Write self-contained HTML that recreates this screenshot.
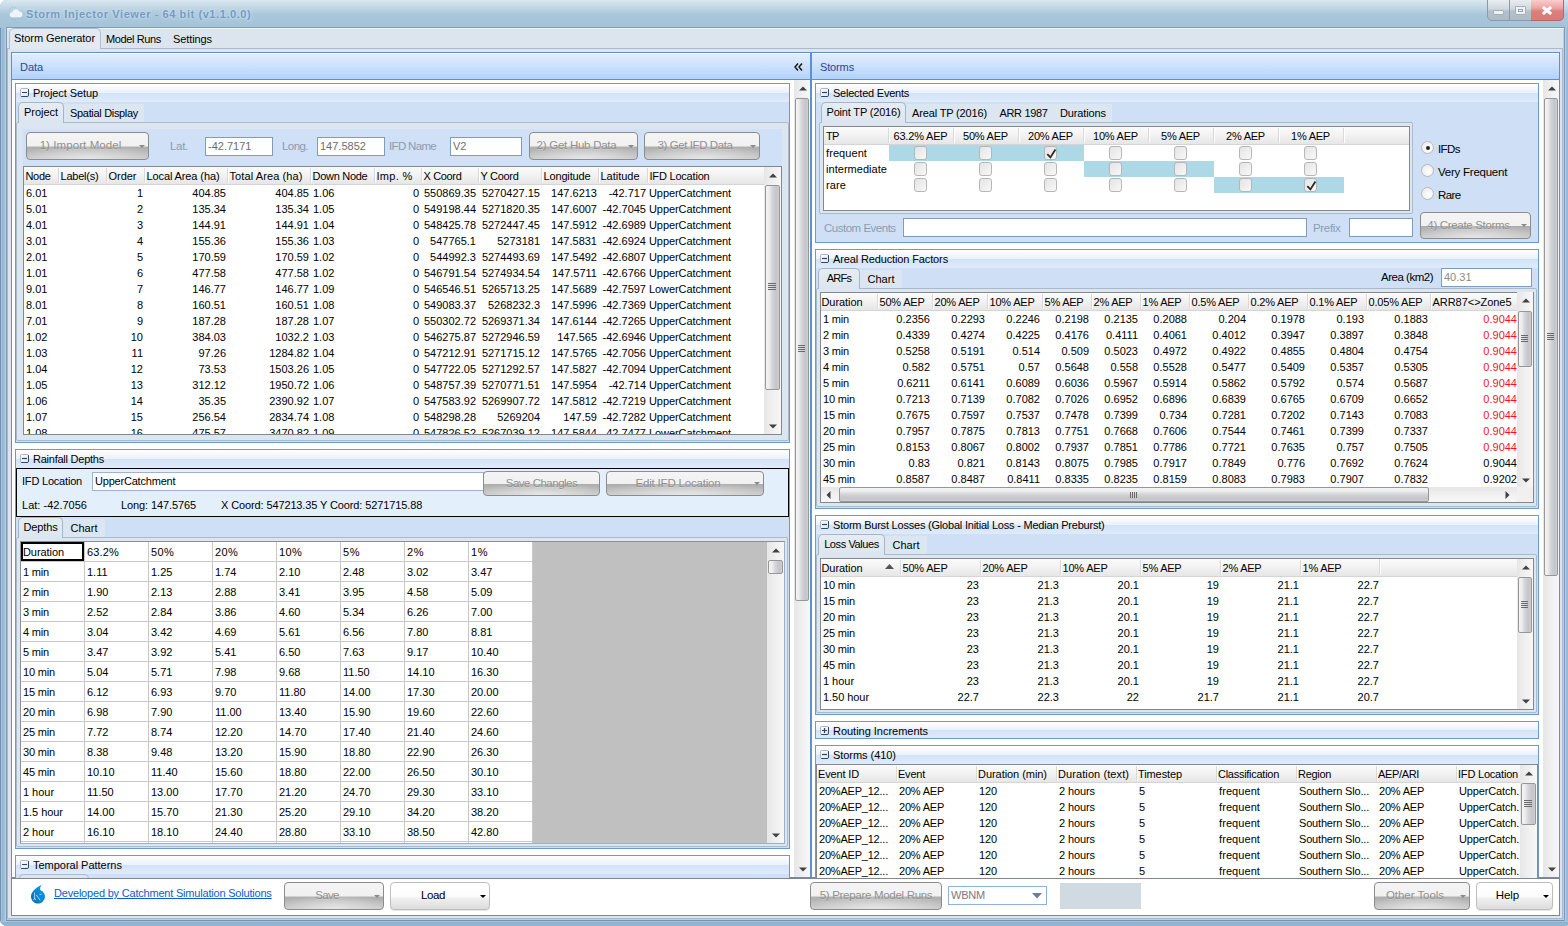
<!DOCTYPE html><html><head><meta charset="utf-8"><title>Storm Injector Viewer</title><style>
html,body{margin:0;padding:0;background:#fff;}
body{width:1568px;height:926px;overflow:hidden;font-family:"Liberation Sans",sans-serif;font-size:11px;color:#000;}
#win{letter-spacing:-0.2px;position:absolute;left:0;top:0;width:1568px;height:926px;overflow:hidden;border-radius:7px 0 2px 7px;background:#92b3d1;}
#win div{position:absolute;box-sizing:border-box;white-space:nowrap;}
.t{overflow:visible;}
.r{text-align:right;}
.c{text-align:center;}
.clip{overflow:hidden;}
.hdr{background:linear-gradient(#fbfbfb,#f3f3f3 45%,#e6e6e6);border-bottom:1px solid #d5d5d5;}
.sep{background:#d9d9d9;border-right:1px solid #fff;}
.grp{border:1px solid #6b99d8;background:#cfe0f6;}
.grph{background:linear-gradient(#ffffff,#eaf1fa 50%,#d2e2f6 50%,#dfebfb);}
.btn{border:1px solid #8c8c8c;border-radius:4px;color:#9a9a9a;font-size:12px;text-align:center;background:radial-gradient(ellipse 60% 55% at 50% 100%,#e6e6e6,rgba(230,230,230,0) 100%),linear-gradient(#f4f4f4,#f1f1f1 51%,#adadad 53%,#c9c9c9);}
.btn2{border:1px solid #bdbdbd;border-radius:4px;color:#000;font-size:12px;text-align:center;background:linear-gradient(#ffffff,#fdfdfd 50%,#efefef 60%,#dcdcdc);box-shadow:0 1px 0 #e6e6e6;}
.inp{background:#fff;border:1px solid #7f9db9;color:#6d6d6d;font-size:11px;letter-spacing:0;}
.sbv{background:linear-gradient(90deg,#e6e6e6,#f0f0f0 50%,#f7f7f7);}
.thv{border:1px solid #979797;border-radius:2px;background:linear-gradient(90deg,#f4f4f4,#ececec 25%,#d6d7da 45%,#c4c4c9 80%,#d0d0d2);}
.sbh{background:linear-gradient(#e6e6e6,#f0f0f0 50%,#f7f7f7);}
.thh{border:1px solid #979797;border-radius:2px;background:linear-gradient(#f4f4f4,#ececec 25%,#d6d7da 45%,#c4c4c9 80%,#d0d0d2);}
.cb{border:1px solid #b6b6b6;border-radius:3px;background:linear-gradient(135deg,#e4e4e4,#f8f8f8);}
.rb{border:1px solid #b9b9b9;border-radius:50%;background:radial-gradient(circle at 60% 60%,#ffffff,#e6e6e6);}
.n{letter-spacing:0;}
.sg{font-size:11.5px;letter-spacing:-0.45px;}

</style></head><body>
<div id="win">
<div style="left:0px;top:0px;width:1568px;height:29px;background:linear-gradient(#dbe8f0,#c3d8e5 25%,#a9c7db 50%,#a5c3d8);"></div>
<div style="left:0px;top:28px;width:6px;height:898px;background:linear-gradient(90deg,#7393b2 0 1px,#9dc0da 1px 2px,#98b9d4 2px 4px,#a3c1da 4px 5px,#b0cde2 5px 6px);"></div>
<div style="left:1565px;top:28px;width:3px;height:898px;background:linear-gradient(90deg,#b0cde2 0 1px,#9dbcd7 1px 2px,#98b9d4 2px 3px);"></div>
<div style="left:0px;top:921px;width:1568px;height:5px;background:linear-gradient(#a3c3dc 0 1px,#8eb1ce 1px,#94b7d3);"></div>
<div style="left:6px;top:27px;width:1559px;height:894px;background:#dce5ed;border:1px solid #7d9bb9;border-bottom-color:#7394b7;"></div>
<div style="left:7px;top:28px;width:1557px;height:1px;background:#eef3f8;"></div>
<div style="left:1563px;top:29px;width:1px;height:891px;background:#bfd0dc;"></div>
<div style="left:7px;top:919px;width:1557px;height:1px;background:#bdd0db;"></div>
<svg style="position:absolute;left:8px;top:6px" width="16" height="16" viewBox="0 0 16 16"><path d="M1.2 3.2l1.5-.9M3.5 1.6l1.6-.5M6.2 1l1.6.3" stroke="#8ccaea" stroke-width="0.9" fill="none"/><path d="M4.2 11.3a2.6 2.6 0 0 1 .2-5.2 3.6 3.6 0 0 1 6.8-.6 2.9 2.9 0 0 1 .5 5.8Z" fill="#eef5fa"/><path d="M5 12.6l-.5 1.2M7.6 13l-.5 1.6M10.2 12.6l-.5 1.2" stroke="#7fc6ea" stroke-width="1"/></svg>
<div class="t" style="left:26px;top:5px;height:18px;line-height:18px;font-weight:bold;font-size:11px;letter-spacing:0.58px;color:#759bc1;text-shadow:0 0 2px #d3e3ee,0 0 4px #cfe0ec;">Storm Injector Viewer - 64 bit (v1.1.0.0)</div>
<div style="left:1487px;top:-1px;width:77px;height:22px;border:1px solid #8b9aa6;border-radius:0 0 5px 5px;background:linear-gradient(#e9edf0,#cfd7dd 45%,#b5c1ca 55%,#aebbc5);"></div>
<div style="left:1509px;top:0px;width:1px;height:20px;background:#8b9aa6;"></div>
<div style="left:1531px;top:-1px;width:33px;height:22px;border:1px solid #b86565;border-left:none;border-radius:0 0 5px 0;background:linear-gradient(#f9cdcc,#eba5a4 40%,#dc7f7f 55%,#d97979);"></div>
<div style="left:1493px;top:10px;width:11px;height:5px;background:#eef2f5;border:1px solid #a3b0bb;border-radius:1px;"></div>
<div style="left:1515px;top:6px;width:11px;height:9px;background:#eef2f5;border:1px solid #a3b0bb;border-radius:1px;"></div>
<div style="left:1518px;top:9px;width:5px;height:3px;background:#eef2f5;border:1px solid #96a5b1;"></div>
<svg style="position:absolute;left:1541px;top:6px" width="12" height="9"><path d="M1.8 1L10.2 8M10.2 1L1.8 8" stroke="#fff" stroke-width="3"/></svg>
<div style="left:7px;top:48px;width:1556px;height:871px;border:1px solid #a9bac9;"></div>
<div style="left:9px;top:28px;width:92px;height:21px;border:1px solid #b0bfcd;border-bottom:none;border-radius:5px 5px 0 0;background:#e2e9f0;"></div>
<div class="t" style="left:14px;top:30px;height:16px;line-height:16px;letter-spacing:-0.06px;">Storm Generator</div>
<div class="t" style="left:106px;top:31px;height:16px;line-height:16px;letter-spacing:-0.37px;">Model Runs</div>
<div class="t" style="left:173px;top:31px;height:16px;line-height:16px;letter-spacing:-0.09px;">Settings</div>
<div style="left:11px;top:52px;width:800px;height:826px;border:1px solid #5f8fd3;background:#fff;"></div>
<div style="left:12px;top:53px;width:798px;height:26px;background:linear-gradient(#e1edfd,#cbe0fc 50%,#b2d3fc);border-top:1px solid #fff;"></div>
<div style="left:11px;top:79px;width:800px;height:1px;background:#5f8fd3;"></div>
<div class="t" style="left:20px;top:59px;height:16px;line-height:16px;color:#27479a;letter-spacing:-0.06px;">Data</div>
<div style="left:811px;top:52px;width:749px;height:826px;border:1px solid #5f8fd3;background:#fff;"></div>
<div style="left:812px;top:53px;width:747px;height:26px;background:linear-gradient(#e1edfd,#cbe0fc 50%,#b2d3fc);border-top:1px solid #fff;"></div>
<div style="left:811px;top:79px;width:749px;height:1px;background:#5f8fd3;"></div>
<div class="t" style="left:820px;top:59px;height:16px;line-height:16px;color:#27479a;letter-spacing:-0.14px;">Storms</div>
<svg style="position:absolute;left:794px;top:63px" width="9" height="8"><path d="M4 0.5L1 4L4 7.5M8 0.5L5 4L8 7.5" fill="none" stroke="#111" stroke-width="1.4"/></svg>
<div class="sbv" style="left:794px;top:80px;width:16px;height:797px;"></div>
<svg style="position:absolute;left:799px;top:86px" width="8" height="5"><path d="M0 4.5L4 0.5L8 4.5Z" fill="#404040"/></svg>
<svg style="position:absolute;left:799px;top:867px" width="8" height="5"><path d="M0 0.5L4 4.5L8 0.5Z" fill="#404040"/></svg>
<div class="thv" style="left:795px;top:98px;width:14px;height:503px;"></div>
<div style="left:798px;top:345px;width:7px;height:1px;background:#6a6a6a;"></div>
<div style="left:798px;top:347px;width:7px;height:1px;background:#6a6a6a;"></div>
<div style="left:798px;top:349px;width:7px;height:1px;background:#6a6a6a;"></div>
<div style="left:798px;top:351px;width:7px;height:1px;background:#6a6a6a;"></div>
<div class="grp" style="left:15px;top:83px;width:775px;height:360px;"></div>
<div class="grph" style="left:16px;top:84px;width:773px;height:18px;"></div>
<svg style="position:absolute;left:20px;top:88px" width="9" height="9"><defs><linearGradient id="xg20_88" x1="0" y1="0" x2="1" y2="1"><stop offset="0" stop-color="#ffffff"/><stop offset="1" stop-color="#dde4f3"/></linearGradient></defs><rect x="0.5" y="0.5" width="8" height="8" rx="1.2" fill="url(#xg20_88)" stroke="#a9b7c6"/><path d="M8.5 1.2V7.3Q8.5 8.5 7.3 8.5H1.2" fill="none" stroke="#2f4862" stroke-width="1"/><path d="M2 4.5H7" stroke="#27466a" stroke-width="1.2"/></svg>
<div class="t" style="left:33px;top:85px;height:16px;line-height:16px;letter-spacing:-0.08px;">Project Setup</div>
<div style="left:18px;top:102px;width:46px;height:21px;border:1px solid #a3b7cc;border-bottom:none;border-radius:5px 5px 0 0;background:linear-gradient(#e6ecf1,#dce6f0);z-index:2;"></div>
<div class="t" style="left:18px;top:103px;width:46px;height:18px;line-height:18px;text-align:center;z-index:3;letter-spacing:-0.03px;">Project</div>
<div style="left:64px;top:104px;width:80px;height:18px;background:#dbe6f1;"></div>
<div class="t" style="left:64px;top:105px;width:80px;height:16px;line-height:16px;text-align:center;letter-spacing:-0.32px;">Spatial Display</div>
<div style="left:16px;top:122px;width:773px;height:319px;border:1px solid #a9bac9;border-radius:2px;background:#dce6f0;"></div>
<div style="left:20px;top:122px;width:43px;height:1px;background:#dce6f0;z-index:3;"></div>
<div style="left:23px;top:129px;width:759px;height:37px;background:#cfe0f7;"></div>
<div class="btn" style="left:26px;top:132px;width:123px;height:28px;"></div>
<div class="t" style="left:26px;top:132px;width:109px;height:27px;line-height:27px;font-size:11.5px;letter-spacing:0.08px;text-align:center;color:#909090;text-shadow:0 1px 0 rgba(255,255,255,0.25);">1) Import Model</div>
<svg style="position:absolute;left:139px;top:145px" width="6" height="3"><path d="M0 0H6L3 3Z" fill="#8a8a8a"/></svg>
<div class="t sg" style="left:170px;top:138px;height:16px;line-height:16px;color:#8d9cb0;letter-spacing:-0.30px;">Lat.</div>
<div class="inp" style="left:205px;top:137px;width:68px;height:19px;"><div style="left:2px;top:0;line-height:17px;">-42.7171</div></div>
<div class="t sg" style="left:282px;top:138px;height:16px;line-height:16px;color:#8d9cb0;letter-spacing:-0.56px;">Long.</div>
<div class="inp" style="left:317px;top:137px;width:68px;height:19px;"><div style="left:2px;top:0;line-height:17px;">147.5852</div></div>
<div class="t sg" style="left:389px;top:138px;height:16px;line-height:16px;color:#8d9cb0;letter-spacing:-0.67px;">IFD Name</div>
<div class="inp" style="left:450px;top:137px;width:72px;height:19px;"><div style="left:2px;top:0;line-height:17px;">V2</div></div>
<div class="btn" style="left:529px;top:132px;width:109px;height:28px;"></div>
<div class="t" style="left:529px;top:132px;width:95px;height:27px;line-height:27px;font-size:11.5px;letter-spacing:-0.26px;text-align:center;color:#909090;text-shadow:0 1px 0 rgba(255,255,255,0.25);">2) Get Hub Data</div>
<svg style="position:absolute;left:628px;top:145px" width="6" height="3"><path d="M0 0H6L3 3Z" fill="#8a8a8a"/></svg>
<div class="btn" style="left:644px;top:132px;width:116px;height:28px;"></div>
<div class="t" style="left:644px;top:132px;width:102px;height:27px;line-height:27px;font-size:11.5px;letter-spacing:-0.41px;text-align:center;color:#909090;text-shadow:0 1px 0 rgba(255,255,255,0.25);">3) Get IFD Data</div>
<svg style="position:absolute;left:750px;top:145px" width="6" height="3"><path d="M0 0H6L3 3Z" fill="#8a8a8a"/></svg>
<div style="left:23px;top:166px;width:759px;height:269px;border:1px solid #828790;background:#fff;"></div>
<div class="clip" style="left:24px;top:167px;width:757px;height:267px;background:#fff;"></div>
<div class="hdr" style="left:24px;top:167px;width:740px;height:18px;"></div>
<div class="t" style="left:25.5px;top:168px;height:17px;line-height:17px;letter-spacing:-0.32px;">Node</div>
<div class="sep" style="left:58px;top:168px;width:2px;height:15px;"></div>
<div class="t" style="left:60.5px;top:168px;height:17px;line-height:17px;letter-spacing:-0.22px;">Label(s)</div>
<div class="sep" style="left:106px;top:168px;width:2px;height:15px;"></div>
<div class="t" style="left:108.5px;top:168px;height:17px;line-height:17px;letter-spacing:-0.02px;">Order</div>
<div class="sep" style="left:144px;top:168px;width:2px;height:15px;"></div>
<div class="t" style="left:146.5px;top:168px;height:17px;line-height:17px;letter-spacing:-0.11px;">Local Area (ha)</div>
<div class="sep" style="left:227px;top:168px;width:2px;height:15px;"></div>
<div class="t" style="left:229.5px;top:168px;height:17px;line-height:17px;letter-spacing:0.10px;">Total Area (ha)</div>
<div class="sep" style="left:310px;top:168px;width:2px;height:15px;"></div>
<div class="t" style="left:312.5px;top:168px;height:17px;line-height:17px;letter-spacing:-0.28px;">Down Node</div>
<div class="sep" style="left:374px;top:168px;width:2px;height:15px;"></div>
<div class="t" style="left:376.5px;top:168px;height:17px;line-height:17px;letter-spacing:0.30px;">Imp. %</div>
<div class="sep" style="left:421px;top:168px;width:2px;height:15px;"></div>
<div class="t" style="left:423.5px;top:168px;height:17px;line-height:17px;letter-spacing:-0.34px;">X Coord</div>
<div class="sep" style="left:478px;top:168px;width:2px;height:15px;"></div>
<div class="t" style="left:480.5px;top:168px;height:17px;line-height:17px;letter-spacing:-0.31px;">Y Coord</div>
<div class="sep" style="left:541px;top:168px;width:2px;height:15px;"></div>
<div class="t" style="left:543.5px;top:168px;height:17px;line-height:17px;letter-spacing:-0.15px;">Longitude</div>
<div class="sep" style="left:598px;top:168px;width:2px;height:15px;"></div>
<div class="t" style="left:600.5px;top:168px;height:17px;line-height:17px;letter-spacing:-0.02px;">Latitude</div>
<div class="sep" style="left:647px;top:168px;width:2px;height:15px;"></div>
<div class="t" style="left:649.5px;top:168px;height:17px;line-height:17px;letter-spacing:-0.20px;">IFD Location</div>
<div class="clip n" style="left:24px;top:185px;width:740px;height:16px;"><div style="left:2px;top:0;width:30px;height:16px;line-height:16px;">6.01</div><div style="left:83px;top:0;width:36px;height:16px;line-height:16px;text-align:right;">1</div><div style="left:121px;top:0;width:81px;height:16px;line-height:16px;text-align:right;">404.85</div><div style="left:204px;top:0;width:81px;height:16px;line-height:16px;text-align:right;">404.85</div><div style="left:289px;top:0;width:40px;height:16px;line-height:16px;">1.06</div><div style="left:351px;top:0;width:44px;height:16px;line-height:16px;text-align:right;">0</div><div style="left:398px;top:0;width:54px;height:16px;line-height:16px;text-align:right;">550869.35</div><div style="left:455px;top:0;width:61px;height:16px;line-height:16px;text-align:right;">5270427.15</div><div style="left:518px;top:0;width:55px;height:16px;line-height:16px;text-align:right;">147.6213</div><div style="left:575px;top:0;width:47px;height:16px;line-height:16px;text-align:right;">-42.717</div><div style="left:625px;top:0;width:110px;height:16px;line-height:16px;letter-spacing:-0.08px;">UpperCatchment</div></div>
<div class="clip n" style="left:24px;top:201px;width:740px;height:16px;"><div style="left:2px;top:0;width:30px;height:16px;line-height:16px;">5.01</div><div style="left:83px;top:0;width:36px;height:16px;line-height:16px;text-align:right;">2</div><div style="left:121px;top:0;width:81px;height:16px;line-height:16px;text-align:right;">135.34</div><div style="left:204px;top:0;width:81px;height:16px;line-height:16px;text-align:right;">135.34</div><div style="left:289px;top:0;width:40px;height:16px;line-height:16px;">1.05</div><div style="left:351px;top:0;width:44px;height:16px;line-height:16px;text-align:right;">0</div><div style="left:398px;top:0;width:54px;height:16px;line-height:16px;text-align:right;">549198.44</div><div style="left:455px;top:0;width:61px;height:16px;line-height:16px;text-align:right;">5271820.35</div><div style="left:518px;top:0;width:55px;height:16px;line-height:16px;text-align:right;">147.6007</div><div style="left:575px;top:0;width:47px;height:16px;line-height:16px;text-align:right;">-42.7045</div><div style="left:625px;top:0;width:110px;height:16px;line-height:16px;letter-spacing:-0.08px;">UpperCatchment</div></div>
<div class="clip n" style="left:24px;top:217px;width:740px;height:16px;"><div style="left:2px;top:0;width:30px;height:16px;line-height:16px;">4.01</div><div style="left:83px;top:0;width:36px;height:16px;line-height:16px;text-align:right;">3</div><div style="left:121px;top:0;width:81px;height:16px;line-height:16px;text-align:right;">144.91</div><div style="left:204px;top:0;width:81px;height:16px;line-height:16px;text-align:right;">144.91</div><div style="left:289px;top:0;width:40px;height:16px;line-height:16px;">1.04</div><div style="left:351px;top:0;width:44px;height:16px;line-height:16px;text-align:right;">0</div><div style="left:398px;top:0;width:54px;height:16px;line-height:16px;text-align:right;">548425.78</div><div style="left:455px;top:0;width:61px;height:16px;line-height:16px;text-align:right;">5272447.45</div><div style="left:518px;top:0;width:55px;height:16px;line-height:16px;text-align:right;">147.5912</div><div style="left:575px;top:0;width:47px;height:16px;line-height:16px;text-align:right;">-42.6989</div><div style="left:625px;top:0;width:110px;height:16px;line-height:16px;letter-spacing:-0.08px;">UpperCatchment</div></div>
<div class="clip n" style="left:24px;top:233px;width:740px;height:16px;"><div style="left:2px;top:0;width:30px;height:16px;line-height:16px;">3.01</div><div style="left:83px;top:0;width:36px;height:16px;line-height:16px;text-align:right;">4</div><div style="left:121px;top:0;width:81px;height:16px;line-height:16px;text-align:right;">155.36</div><div style="left:204px;top:0;width:81px;height:16px;line-height:16px;text-align:right;">155.36</div><div style="left:289px;top:0;width:40px;height:16px;line-height:16px;">1.03</div><div style="left:351px;top:0;width:44px;height:16px;line-height:16px;text-align:right;">0</div><div style="left:398px;top:0;width:54px;height:16px;line-height:16px;text-align:right;">547765.1</div><div style="left:455px;top:0;width:61px;height:16px;line-height:16px;text-align:right;">5273181</div><div style="left:518px;top:0;width:55px;height:16px;line-height:16px;text-align:right;">147.5831</div><div style="left:575px;top:0;width:47px;height:16px;line-height:16px;text-align:right;">-42.6924</div><div style="left:625px;top:0;width:110px;height:16px;line-height:16px;letter-spacing:-0.08px;">UpperCatchment</div></div>
<div class="clip n" style="left:24px;top:249px;width:740px;height:16px;"><div style="left:2px;top:0;width:30px;height:16px;line-height:16px;">2.01</div><div style="left:83px;top:0;width:36px;height:16px;line-height:16px;text-align:right;">5</div><div style="left:121px;top:0;width:81px;height:16px;line-height:16px;text-align:right;">170.59</div><div style="left:204px;top:0;width:81px;height:16px;line-height:16px;text-align:right;">170.59</div><div style="left:289px;top:0;width:40px;height:16px;line-height:16px;">1.02</div><div style="left:351px;top:0;width:44px;height:16px;line-height:16px;text-align:right;">0</div><div style="left:398px;top:0;width:54px;height:16px;line-height:16px;text-align:right;">544992.3</div><div style="left:455px;top:0;width:61px;height:16px;line-height:16px;text-align:right;">5274493.69</div><div style="left:518px;top:0;width:55px;height:16px;line-height:16px;text-align:right;">147.5492</div><div style="left:575px;top:0;width:47px;height:16px;line-height:16px;text-align:right;">-42.6807</div><div style="left:625px;top:0;width:110px;height:16px;line-height:16px;letter-spacing:-0.08px;">UpperCatchment</div></div>
<div class="clip n" style="left:24px;top:265px;width:740px;height:16px;"><div style="left:2px;top:0;width:30px;height:16px;line-height:16px;">1.01</div><div style="left:83px;top:0;width:36px;height:16px;line-height:16px;text-align:right;">6</div><div style="left:121px;top:0;width:81px;height:16px;line-height:16px;text-align:right;">477.58</div><div style="left:204px;top:0;width:81px;height:16px;line-height:16px;text-align:right;">477.58</div><div style="left:289px;top:0;width:40px;height:16px;line-height:16px;">1.02</div><div style="left:351px;top:0;width:44px;height:16px;line-height:16px;text-align:right;">0</div><div style="left:398px;top:0;width:54px;height:16px;line-height:16px;text-align:right;">546791.54</div><div style="left:455px;top:0;width:61px;height:16px;line-height:16px;text-align:right;">5274934.54</div><div style="left:518px;top:0;width:55px;height:16px;line-height:16px;text-align:right;">147.5711</div><div style="left:575px;top:0;width:47px;height:16px;line-height:16px;text-align:right;">-42.6766</div><div style="left:625px;top:0;width:110px;height:16px;line-height:16px;letter-spacing:-0.08px;">UpperCatchment</div></div>
<div class="clip n" style="left:24px;top:281px;width:740px;height:16px;"><div style="left:2px;top:0;width:30px;height:16px;line-height:16px;">9.01</div><div style="left:83px;top:0;width:36px;height:16px;line-height:16px;text-align:right;">7</div><div style="left:121px;top:0;width:81px;height:16px;line-height:16px;text-align:right;">146.77</div><div style="left:204px;top:0;width:81px;height:16px;line-height:16px;text-align:right;">146.77</div><div style="left:289px;top:0;width:40px;height:16px;line-height:16px;">1.09</div><div style="left:351px;top:0;width:44px;height:16px;line-height:16px;text-align:right;">0</div><div style="left:398px;top:0;width:54px;height:16px;line-height:16px;text-align:right;">546546.51</div><div style="left:455px;top:0;width:61px;height:16px;line-height:16px;text-align:right;">5265713.25</div><div style="left:518px;top:0;width:55px;height:16px;line-height:16px;text-align:right;">147.5689</div><div style="left:575px;top:0;width:47px;height:16px;line-height:16px;text-align:right;">-42.7597</div><div style="left:625px;top:0;width:110px;height:16px;line-height:16px;letter-spacing:-0.08px;">LowerCatchment</div></div>
<div class="clip n" style="left:24px;top:297px;width:740px;height:16px;"><div style="left:2px;top:0;width:30px;height:16px;line-height:16px;">8.01</div><div style="left:83px;top:0;width:36px;height:16px;line-height:16px;text-align:right;">8</div><div style="left:121px;top:0;width:81px;height:16px;line-height:16px;text-align:right;">160.51</div><div style="left:204px;top:0;width:81px;height:16px;line-height:16px;text-align:right;">160.51</div><div style="left:289px;top:0;width:40px;height:16px;line-height:16px;">1.08</div><div style="left:351px;top:0;width:44px;height:16px;line-height:16px;text-align:right;">0</div><div style="left:398px;top:0;width:54px;height:16px;line-height:16px;text-align:right;">549083.37</div><div style="left:455px;top:0;width:61px;height:16px;line-height:16px;text-align:right;">5268232.3</div><div style="left:518px;top:0;width:55px;height:16px;line-height:16px;text-align:right;">147.5996</div><div style="left:575px;top:0;width:47px;height:16px;line-height:16px;text-align:right;">-42.7369</div><div style="left:625px;top:0;width:110px;height:16px;line-height:16px;letter-spacing:-0.08px;">UpperCatchment</div></div>
<div class="clip n" style="left:24px;top:313px;width:740px;height:16px;"><div style="left:2px;top:0;width:30px;height:16px;line-height:16px;">7.01</div><div style="left:83px;top:0;width:36px;height:16px;line-height:16px;text-align:right;">9</div><div style="left:121px;top:0;width:81px;height:16px;line-height:16px;text-align:right;">187.28</div><div style="left:204px;top:0;width:81px;height:16px;line-height:16px;text-align:right;">187.28</div><div style="left:289px;top:0;width:40px;height:16px;line-height:16px;">1.07</div><div style="left:351px;top:0;width:44px;height:16px;line-height:16px;text-align:right;">0</div><div style="left:398px;top:0;width:54px;height:16px;line-height:16px;text-align:right;">550302.72</div><div style="left:455px;top:0;width:61px;height:16px;line-height:16px;text-align:right;">5269371.34</div><div style="left:518px;top:0;width:55px;height:16px;line-height:16px;text-align:right;">147.6144</div><div style="left:575px;top:0;width:47px;height:16px;line-height:16px;text-align:right;">-42.7265</div><div style="left:625px;top:0;width:110px;height:16px;line-height:16px;letter-spacing:-0.08px;">UpperCatchment</div></div>
<div class="clip n" style="left:24px;top:329px;width:740px;height:16px;"><div style="left:2px;top:0;width:30px;height:16px;line-height:16px;">1.02</div><div style="left:83px;top:0;width:36px;height:16px;line-height:16px;text-align:right;">10</div><div style="left:121px;top:0;width:81px;height:16px;line-height:16px;text-align:right;">384.03</div><div style="left:204px;top:0;width:81px;height:16px;line-height:16px;text-align:right;">1032.2</div><div style="left:289px;top:0;width:40px;height:16px;line-height:16px;">1.03</div><div style="left:351px;top:0;width:44px;height:16px;line-height:16px;text-align:right;">0</div><div style="left:398px;top:0;width:54px;height:16px;line-height:16px;text-align:right;">546275.87</div><div style="left:455px;top:0;width:61px;height:16px;line-height:16px;text-align:right;">5272946.59</div><div style="left:518px;top:0;width:55px;height:16px;line-height:16px;text-align:right;">147.565</div><div style="left:575px;top:0;width:47px;height:16px;line-height:16px;text-align:right;">-42.6946</div><div style="left:625px;top:0;width:110px;height:16px;line-height:16px;letter-spacing:-0.08px;">UpperCatchment</div></div>
<div class="clip n" style="left:24px;top:345px;width:740px;height:16px;"><div style="left:2px;top:0;width:30px;height:16px;line-height:16px;">1.03</div><div style="left:83px;top:0;width:36px;height:16px;line-height:16px;text-align:right;">11</div><div style="left:121px;top:0;width:81px;height:16px;line-height:16px;text-align:right;">97.26</div><div style="left:204px;top:0;width:81px;height:16px;line-height:16px;text-align:right;">1284.82</div><div style="left:289px;top:0;width:40px;height:16px;line-height:16px;">1.04</div><div style="left:351px;top:0;width:44px;height:16px;line-height:16px;text-align:right;">0</div><div style="left:398px;top:0;width:54px;height:16px;line-height:16px;text-align:right;">547212.91</div><div style="left:455px;top:0;width:61px;height:16px;line-height:16px;text-align:right;">5271715.12</div><div style="left:518px;top:0;width:55px;height:16px;line-height:16px;text-align:right;">147.5765</div><div style="left:575px;top:0;width:47px;height:16px;line-height:16px;text-align:right;">-42.7056</div><div style="left:625px;top:0;width:110px;height:16px;line-height:16px;letter-spacing:-0.08px;">UpperCatchment</div></div>
<div class="clip n" style="left:24px;top:361px;width:740px;height:16px;"><div style="left:2px;top:0;width:30px;height:16px;line-height:16px;">1.04</div><div style="left:83px;top:0;width:36px;height:16px;line-height:16px;text-align:right;">12</div><div style="left:121px;top:0;width:81px;height:16px;line-height:16px;text-align:right;">73.53</div><div style="left:204px;top:0;width:81px;height:16px;line-height:16px;text-align:right;">1503.26</div><div style="left:289px;top:0;width:40px;height:16px;line-height:16px;">1.05</div><div style="left:351px;top:0;width:44px;height:16px;line-height:16px;text-align:right;">0</div><div style="left:398px;top:0;width:54px;height:16px;line-height:16px;text-align:right;">547722.05</div><div style="left:455px;top:0;width:61px;height:16px;line-height:16px;text-align:right;">5271292.57</div><div style="left:518px;top:0;width:55px;height:16px;line-height:16px;text-align:right;">147.5827</div><div style="left:575px;top:0;width:47px;height:16px;line-height:16px;text-align:right;">-42.7094</div><div style="left:625px;top:0;width:110px;height:16px;line-height:16px;letter-spacing:-0.08px;">UpperCatchment</div></div>
<div class="clip n" style="left:24px;top:377px;width:740px;height:16px;"><div style="left:2px;top:0;width:30px;height:16px;line-height:16px;">1.05</div><div style="left:83px;top:0;width:36px;height:16px;line-height:16px;text-align:right;">13</div><div style="left:121px;top:0;width:81px;height:16px;line-height:16px;text-align:right;">312.12</div><div style="left:204px;top:0;width:81px;height:16px;line-height:16px;text-align:right;">1950.72</div><div style="left:289px;top:0;width:40px;height:16px;line-height:16px;">1.06</div><div style="left:351px;top:0;width:44px;height:16px;line-height:16px;text-align:right;">0</div><div style="left:398px;top:0;width:54px;height:16px;line-height:16px;text-align:right;">548757.39</div><div style="left:455px;top:0;width:61px;height:16px;line-height:16px;text-align:right;">5270771.51</div><div style="left:518px;top:0;width:55px;height:16px;line-height:16px;text-align:right;">147.5954</div><div style="left:575px;top:0;width:47px;height:16px;line-height:16px;text-align:right;">-42.714</div><div style="left:625px;top:0;width:110px;height:16px;line-height:16px;letter-spacing:-0.08px;">UpperCatchment</div></div>
<div class="clip n" style="left:24px;top:393px;width:740px;height:16px;"><div style="left:2px;top:0;width:30px;height:16px;line-height:16px;">1.06</div><div style="left:83px;top:0;width:36px;height:16px;line-height:16px;text-align:right;">14</div><div style="left:121px;top:0;width:81px;height:16px;line-height:16px;text-align:right;">35.35</div><div style="left:204px;top:0;width:81px;height:16px;line-height:16px;text-align:right;">2390.92</div><div style="left:289px;top:0;width:40px;height:16px;line-height:16px;">1.07</div><div style="left:351px;top:0;width:44px;height:16px;line-height:16px;text-align:right;">0</div><div style="left:398px;top:0;width:54px;height:16px;line-height:16px;text-align:right;">547583.92</div><div style="left:455px;top:0;width:61px;height:16px;line-height:16px;text-align:right;">5269907.72</div><div style="left:518px;top:0;width:55px;height:16px;line-height:16px;text-align:right;">147.5812</div><div style="left:575px;top:0;width:47px;height:16px;line-height:16px;text-align:right;">-42.7219</div><div style="left:625px;top:0;width:110px;height:16px;line-height:16px;letter-spacing:-0.08px;">UpperCatchment</div></div>
<div class="clip n" style="left:24px;top:409px;width:740px;height:16px;"><div style="left:2px;top:0;width:30px;height:16px;line-height:16px;">1.07</div><div style="left:83px;top:0;width:36px;height:16px;line-height:16px;text-align:right;">15</div><div style="left:121px;top:0;width:81px;height:16px;line-height:16px;text-align:right;">256.54</div><div style="left:204px;top:0;width:81px;height:16px;line-height:16px;text-align:right;">2834.74</div><div style="left:289px;top:0;width:40px;height:16px;line-height:16px;">1.08</div><div style="left:351px;top:0;width:44px;height:16px;line-height:16px;text-align:right;">0</div><div style="left:398px;top:0;width:54px;height:16px;line-height:16px;text-align:right;">548298.28</div><div style="left:455px;top:0;width:61px;height:16px;line-height:16px;text-align:right;">5269204</div><div style="left:518px;top:0;width:55px;height:16px;line-height:16px;text-align:right;">147.59</div><div style="left:575px;top:0;width:47px;height:16px;line-height:16px;text-align:right;">-42.7282</div><div style="left:625px;top:0;width:110px;height:16px;line-height:16px;letter-spacing:-0.08px;">UpperCatchment</div></div>
<div class="clip n" style="left:24px;top:425px;width:740px;height:9px;"><div style="left:2px;top:0;width:30px;height:16px;line-height:16px;">1.08</div><div style="left:83px;top:0;width:36px;height:16px;line-height:16px;text-align:right;">16</div><div style="left:121px;top:0;width:81px;height:16px;line-height:16px;text-align:right;">475.57</div><div style="left:204px;top:0;width:81px;height:16px;line-height:16px;text-align:right;">3470.82</div><div style="left:289px;top:0;width:40px;height:16px;line-height:16px;">1.09</div><div style="left:351px;top:0;width:44px;height:16px;line-height:16px;text-align:right;">0</div><div style="left:398px;top:0;width:54px;height:16px;line-height:16px;text-align:right;">547826.52</div><div style="left:455px;top:0;width:61px;height:16px;line-height:16px;text-align:right;">5267039.12</div><div style="left:518px;top:0;width:55px;height:16px;line-height:16px;text-align:right;">147.5844</div><div style="left:575px;top:0;width:47px;height:16px;line-height:16px;text-align:right;">-42.7477</div><div style="left:625px;top:0;width:110px;height:16px;line-height:16px;letter-spacing:-0.08px;">LowerCatchment</div></div>
<div class="sbv" style="left:764px;top:167px;width:17px;height:267px;"></div>
<svg style="position:absolute;left:769px;top:173px" width="8" height="5"><path d="M0 4.5L4 0.5L8 4.5Z" fill="#404040"/></svg>
<svg style="position:absolute;left:769px;top:424px" width="8" height="5"><path d="M0 0.5L4 4.5L8 0.5Z" fill="#404040"/></svg>
<div class="thv" style="left:765px;top:185px;width:15px;height:205px;"></div>
<div style="left:768px;top:283px;width:8px;height:1px;background:#6a6a6a;"></div>
<div style="left:768px;top:285px;width:8px;height:1px;background:#6a6a6a;"></div>
<div style="left:768px;top:287px;width:8px;height:1px;background:#6a6a6a;"></div>
<div style="left:768px;top:289px;width:8px;height:1px;background:#6a6a6a;"></div>
<div class="grp" style="left:15px;top:449px;width:775px;height:400px;"></div>
<div class="grph" style="left:16px;top:450px;width:773px;height:18px;"></div>
<svg style="position:absolute;left:20px;top:454px" width="9" height="9"><defs><linearGradient id="xg20_454" x1="0" y1="0" x2="1" y2="1"><stop offset="0" stop-color="#ffffff"/><stop offset="1" stop-color="#dde4f3"/></linearGradient></defs><rect x="0.5" y="0.5" width="8" height="8" rx="1.2" fill="url(#xg20_454)" stroke="#a9b7c6"/><path d="M8.5 1.2V7.3Q8.5 8.5 7.3 8.5H1.2" fill="none" stroke="#2f4862" stroke-width="1"/><path d="M2 4.5H7" stroke="#27466a" stroke-width="1.2"/></svg>
<div class="t" style="left:33px;top:451px;height:16px;line-height:16px;letter-spacing:-0.24px;">Rainfall Depths</div>
<div style="left:16px;top:468px;width:773px;height:49px;border:1px solid #000;background:#e4effc;"></div>
<div class="t" style="left:22px;top:473px;height:16px;line-height:16px;letter-spacing:-0.20px;">IFD Location</div>
<div style="left:92px;top:472px;width:392px;height:19px;background:#fff;border:1px solid #9db3cf;"><div style="left:2px;top:0;line-height:17px;">UpperCatchment</div></div>
<div class="btn" style="left:483px;top:471px;width:117px;height:25px;"></div>
<div class="t" style="left:483px;top:471px;width:117px;height:24px;line-height:24px;font-size:11.5px;letter-spacing:-0.50px;text-align:center;color:#909090;text-shadow:0 1px 0 rgba(255,255,255,0.25);">Save Changles</div>
<div class="btn" style="left:606px;top:471px;width:158px;height:25px;"></div>
<div class="t" style="left:606px;top:471px;width:144px;height:24px;line-height:24px;font-size:11.5px;letter-spacing:-0.19px;text-align:center;color:#909090;text-shadow:0 1px 0 rgba(255,255,255,0.25);">Edit IFD Location</div>
<svg style="position:absolute;left:754px;top:482px" width="6" height="3"><path d="M0 0H6L3 3Z" fill="#8a8a8a"/></svg>
<div class="t" style="left:22px;top:497px;height:16px;line-height:16px;letter-spacing:0.01px;">Lat: -42.7056</div>
<div class="t" style="left:121px;top:497px;height:16px;line-height:16px;letter-spacing:-0.10px;">Long: 147.5765</div>
<div class="t" style="left:221px;top:497px;height:16px;line-height:16px;letter-spacing:-0.12px;">X Coord: 547213.35 Y Coord: 5271715.88</div>
<div style="left:18px;top:517px;width:45px;height:21px;border:1px solid #a3b7cc;border-bottom:none;border-radius:5px 5px 0 0;background:linear-gradient(#e6ecf1,#dce6f0);z-index:2;"></div>
<div class="t" style="left:18px;top:518px;width:45px;height:18px;line-height:18px;text-align:center;z-index:3;letter-spacing:-0.14px;">Depths</div>
<div style="left:63px;top:519px;width:42px;height:18px;background:#dbe6f1;"></div>
<div class="t" style="left:63px;top:520px;width:42px;height:16px;line-height:16px;text-align:center;letter-spacing:0.02px;">Chart</div>
<div style="left:16px;top:537px;width:772px;height:310px;border:1px solid #a9bac9;border-radius:2px;background:#dce6f0;"></div>
<div style="left:19px;top:537px;width:43px;height:1px;background:#dce6f0;z-index:3;"></div>
<div style="left:20px;top:541px;width:765px;height:303px;border:1px solid #9fb0c4;border-top-color:#8a9099;border-left-color:#8a9099;background:#c0c0c0;"></div>
<div class="clip" style="left:21px;top:542px;width:763px;height:301px;"></div>
<div class="clip n" style="left:21px;top:542px;width:512px;height:20px;"><div style="left:0px;top:0;width:64px;height:20px;line-height:21px;background:#fff;border-right:1px solid #c8c8c8;border-bottom:1px solid #c8c8c8;padding-left:2px;letter-spacing:-0.07px;">Duration</div><div style="left:64px;top:0;width:64px;height:20px;line-height:21px;background:#fff;border-right:1px solid #c8c8c8;border-bottom:1px solid #c8c8c8;padding-left:2px;letter-spacing:0.16px;">63.2%</div><div style="left:128px;top:0;width:64px;height:20px;line-height:21px;background:#fff;border-right:1px solid #c8c8c8;border-bottom:1px solid #c8c8c8;padding-left:2px;letter-spacing:0.33px;">50%</div><div style="left:192px;top:0;width:64px;height:20px;line-height:21px;background:#fff;border-right:1px solid #c8c8c8;border-bottom:1px solid #c8c8c8;padding-left:2px;letter-spacing:0.33px;">20%</div><div style="left:256px;top:0;width:64px;height:20px;line-height:21px;background:#fff;border-right:1px solid #c8c8c8;border-bottom:1px solid #c8c8c8;padding-left:2px;letter-spacing:0.33px;">10%</div><div style="left:320px;top:0;width:64px;height:20px;line-height:21px;background:#fff;border-right:1px solid #c8c8c8;border-bottom:1px solid #c8c8c8;padding-left:2px;letter-spacing:0.55px;">5%</div><div style="left:384px;top:0;width:64px;height:20px;line-height:21px;background:#fff;border-right:1px solid #c8c8c8;border-bottom:1px solid #c8c8c8;padding-left:2px;letter-spacing:0.55px;">2%</div><div style="left:448px;top:0;width:64px;height:20px;line-height:21px;background:#fff;border-right:1px solid #c8c8c8;border-bottom:1px solid #c8c8c8;padding-left:2px;letter-spacing:0.55px;">1%</div></div>
<div class="clip n" style="left:21px;top:562px;width:512px;height:20px;"><div style="left:0px;top:0;width:64px;height:20px;line-height:21px;background:#fff;border-right:1px solid #c8c8c8;border-bottom:1px solid #c8c8c8;padding-left:2px;letter-spacing:-0.18px;">1 min</div><div style="left:64px;top:0;width:64px;height:20px;line-height:21px;background:#fff;border-right:1px solid #c8c8c8;border-bottom:1px solid #c8c8c8;padding-left:2px;">1.11</div><div style="left:128px;top:0;width:64px;height:20px;line-height:21px;background:#fff;border-right:1px solid #c8c8c8;border-bottom:1px solid #c8c8c8;padding-left:2px;">1.25</div><div style="left:192px;top:0;width:64px;height:20px;line-height:21px;background:#fff;border-right:1px solid #c8c8c8;border-bottom:1px solid #c8c8c8;padding-left:2px;">1.74</div><div style="left:256px;top:0;width:64px;height:20px;line-height:21px;background:#fff;border-right:1px solid #c8c8c8;border-bottom:1px solid #c8c8c8;padding-left:2px;">2.10</div><div style="left:320px;top:0;width:64px;height:20px;line-height:21px;background:#fff;border-right:1px solid #c8c8c8;border-bottom:1px solid #c8c8c8;padding-left:2px;">2.48</div><div style="left:384px;top:0;width:64px;height:20px;line-height:21px;background:#fff;border-right:1px solid #c8c8c8;border-bottom:1px solid #c8c8c8;padding-left:2px;">3.02</div><div style="left:448px;top:0;width:64px;height:20px;line-height:21px;background:#fff;border-right:1px solid #c8c8c8;border-bottom:1px solid #c8c8c8;padding-left:2px;">3.47</div></div>
<div class="clip n" style="left:21px;top:582px;width:512px;height:20px;"><div style="left:0px;top:0;width:64px;height:20px;line-height:21px;background:#fff;border-right:1px solid #c8c8c8;border-bottom:1px solid #c8c8c8;padding-left:2px;letter-spacing:-0.18px;">2 min</div><div style="left:64px;top:0;width:64px;height:20px;line-height:21px;background:#fff;border-right:1px solid #c8c8c8;border-bottom:1px solid #c8c8c8;padding-left:2px;">1.90</div><div style="left:128px;top:0;width:64px;height:20px;line-height:21px;background:#fff;border-right:1px solid #c8c8c8;border-bottom:1px solid #c8c8c8;padding-left:2px;">2.13</div><div style="left:192px;top:0;width:64px;height:20px;line-height:21px;background:#fff;border-right:1px solid #c8c8c8;border-bottom:1px solid #c8c8c8;padding-left:2px;">2.88</div><div style="left:256px;top:0;width:64px;height:20px;line-height:21px;background:#fff;border-right:1px solid #c8c8c8;border-bottom:1px solid #c8c8c8;padding-left:2px;">3.41</div><div style="left:320px;top:0;width:64px;height:20px;line-height:21px;background:#fff;border-right:1px solid #c8c8c8;border-bottom:1px solid #c8c8c8;padding-left:2px;">3.95</div><div style="left:384px;top:0;width:64px;height:20px;line-height:21px;background:#fff;border-right:1px solid #c8c8c8;border-bottom:1px solid #c8c8c8;padding-left:2px;">4.58</div><div style="left:448px;top:0;width:64px;height:20px;line-height:21px;background:#fff;border-right:1px solid #c8c8c8;border-bottom:1px solid #c8c8c8;padding-left:2px;">5.09</div></div>
<div class="clip n" style="left:21px;top:602px;width:512px;height:20px;"><div style="left:0px;top:0;width:64px;height:20px;line-height:21px;background:#fff;border-right:1px solid #c8c8c8;border-bottom:1px solid #c8c8c8;padding-left:2px;letter-spacing:-0.18px;">3 min</div><div style="left:64px;top:0;width:64px;height:20px;line-height:21px;background:#fff;border-right:1px solid #c8c8c8;border-bottom:1px solid #c8c8c8;padding-left:2px;">2.52</div><div style="left:128px;top:0;width:64px;height:20px;line-height:21px;background:#fff;border-right:1px solid #c8c8c8;border-bottom:1px solid #c8c8c8;padding-left:2px;">2.84</div><div style="left:192px;top:0;width:64px;height:20px;line-height:21px;background:#fff;border-right:1px solid #c8c8c8;border-bottom:1px solid #c8c8c8;padding-left:2px;">3.86</div><div style="left:256px;top:0;width:64px;height:20px;line-height:21px;background:#fff;border-right:1px solid #c8c8c8;border-bottom:1px solid #c8c8c8;padding-left:2px;">4.60</div><div style="left:320px;top:0;width:64px;height:20px;line-height:21px;background:#fff;border-right:1px solid #c8c8c8;border-bottom:1px solid #c8c8c8;padding-left:2px;">5.34</div><div style="left:384px;top:0;width:64px;height:20px;line-height:21px;background:#fff;border-right:1px solid #c8c8c8;border-bottom:1px solid #c8c8c8;padding-left:2px;">6.26</div><div style="left:448px;top:0;width:64px;height:20px;line-height:21px;background:#fff;border-right:1px solid #c8c8c8;border-bottom:1px solid #c8c8c8;padding-left:2px;">7.00</div></div>
<div class="clip n" style="left:21px;top:622px;width:512px;height:20px;"><div style="left:0px;top:0;width:64px;height:20px;line-height:21px;background:#fff;border-right:1px solid #c8c8c8;border-bottom:1px solid #c8c8c8;padding-left:2px;letter-spacing:-0.18px;">4 min</div><div style="left:64px;top:0;width:64px;height:20px;line-height:21px;background:#fff;border-right:1px solid #c8c8c8;border-bottom:1px solid #c8c8c8;padding-left:2px;">3.04</div><div style="left:128px;top:0;width:64px;height:20px;line-height:21px;background:#fff;border-right:1px solid #c8c8c8;border-bottom:1px solid #c8c8c8;padding-left:2px;">3.42</div><div style="left:192px;top:0;width:64px;height:20px;line-height:21px;background:#fff;border-right:1px solid #c8c8c8;border-bottom:1px solid #c8c8c8;padding-left:2px;">4.69</div><div style="left:256px;top:0;width:64px;height:20px;line-height:21px;background:#fff;border-right:1px solid #c8c8c8;border-bottom:1px solid #c8c8c8;padding-left:2px;">5.61</div><div style="left:320px;top:0;width:64px;height:20px;line-height:21px;background:#fff;border-right:1px solid #c8c8c8;border-bottom:1px solid #c8c8c8;padding-left:2px;">6.56</div><div style="left:384px;top:0;width:64px;height:20px;line-height:21px;background:#fff;border-right:1px solid #c8c8c8;border-bottom:1px solid #c8c8c8;padding-left:2px;">7.80</div><div style="left:448px;top:0;width:64px;height:20px;line-height:21px;background:#fff;border-right:1px solid #c8c8c8;border-bottom:1px solid #c8c8c8;padding-left:2px;">8.81</div></div>
<div class="clip n" style="left:21px;top:642px;width:512px;height:20px;"><div style="left:0px;top:0;width:64px;height:20px;line-height:21px;background:#fff;border-right:1px solid #c8c8c8;border-bottom:1px solid #c8c8c8;padding-left:2px;letter-spacing:-0.18px;">5 min</div><div style="left:64px;top:0;width:64px;height:20px;line-height:21px;background:#fff;border-right:1px solid #c8c8c8;border-bottom:1px solid #c8c8c8;padding-left:2px;">3.47</div><div style="left:128px;top:0;width:64px;height:20px;line-height:21px;background:#fff;border-right:1px solid #c8c8c8;border-bottom:1px solid #c8c8c8;padding-left:2px;">3.92</div><div style="left:192px;top:0;width:64px;height:20px;line-height:21px;background:#fff;border-right:1px solid #c8c8c8;border-bottom:1px solid #c8c8c8;padding-left:2px;">5.41</div><div style="left:256px;top:0;width:64px;height:20px;line-height:21px;background:#fff;border-right:1px solid #c8c8c8;border-bottom:1px solid #c8c8c8;padding-left:2px;">6.50</div><div style="left:320px;top:0;width:64px;height:20px;line-height:21px;background:#fff;border-right:1px solid #c8c8c8;border-bottom:1px solid #c8c8c8;padding-left:2px;">7.63</div><div style="left:384px;top:0;width:64px;height:20px;line-height:21px;background:#fff;border-right:1px solid #c8c8c8;border-bottom:1px solid #c8c8c8;padding-left:2px;">9.17</div><div style="left:448px;top:0;width:64px;height:20px;line-height:21px;background:#fff;border-right:1px solid #c8c8c8;border-bottom:1px solid #c8c8c8;padding-left:2px;">10.40</div></div>
<div class="clip n" style="left:21px;top:662px;width:512px;height:20px;"><div style="left:0px;top:0;width:64px;height:20px;line-height:21px;background:#fff;border-right:1px solid #c8c8c8;border-bottom:1px solid #c8c8c8;padding-left:2px;letter-spacing:-0.17px;">10 min</div><div style="left:64px;top:0;width:64px;height:20px;line-height:21px;background:#fff;border-right:1px solid #c8c8c8;border-bottom:1px solid #c8c8c8;padding-left:2px;">5.04</div><div style="left:128px;top:0;width:64px;height:20px;line-height:21px;background:#fff;border-right:1px solid #c8c8c8;border-bottom:1px solid #c8c8c8;padding-left:2px;">5.71</div><div style="left:192px;top:0;width:64px;height:20px;line-height:21px;background:#fff;border-right:1px solid #c8c8c8;border-bottom:1px solid #c8c8c8;padding-left:2px;">7.98</div><div style="left:256px;top:0;width:64px;height:20px;line-height:21px;background:#fff;border-right:1px solid #c8c8c8;border-bottom:1px solid #c8c8c8;padding-left:2px;">9.68</div><div style="left:320px;top:0;width:64px;height:20px;line-height:21px;background:#fff;border-right:1px solid #c8c8c8;border-bottom:1px solid #c8c8c8;padding-left:2px;">11.50</div><div style="left:384px;top:0;width:64px;height:20px;line-height:21px;background:#fff;border-right:1px solid #c8c8c8;border-bottom:1px solid #c8c8c8;padding-left:2px;">14.10</div><div style="left:448px;top:0;width:64px;height:20px;line-height:21px;background:#fff;border-right:1px solid #c8c8c8;border-bottom:1px solid #c8c8c8;padding-left:2px;">16.30</div></div>
<div class="clip n" style="left:21px;top:682px;width:512px;height:20px;"><div style="left:0px;top:0;width:64px;height:20px;line-height:21px;background:#fff;border-right:1px solid #c8c8c8;border-bottom:1px solid #c8c8c8;padding-left:2px;letter-spacing:-0.17px;">15 min</div><div style="left:64px;top:0;width:64px;height:20px;line-height:21px;background:#fff;border-right:1px solid #c8c8c8;border-bottom:1px solid #c8c8c8;padding-left:2px;">6.12</div><div style="left:128px;top:0;width:64px;height:20px;line-height:21px;background:#fff;border-right:1px solid #c8c8c8;border-bottom:1px solid #c8c8c8;padding-left:2px;">6.93</div><div style="left:192px;top:0;width:64px;height:20px;line-height:21px;background:#fff;border-right:1px solid #c8c8c8;border-bottom:1px solid #c8c8c8;padding-left:2px;">9.70</div><div style="left:256px;top:0;width:64px;height:20px;line-height:21px;background:#fff;border-right:1px solid #c8c8c8;border-bottom:1px solid #c8c8c8;padding-left:2px;">11.80</div><div style="left:320px;top:0;width:64px;height:20px;line-height:21px;background:#fff;border-right:1px solid #c8c8c8;border-bottom:1px solid #c8c8c8;padding-left:2px;">14.00</div><div style="left:384px;top:0;width:64px;height:20px;line-height:21px;background:#fff;border-right:1px solid #c8c8c8;border-bottom:1px solid #c8c8c8;padding-left:2px;">17.30</div><div style="left:448px;top:0;width:64px;height:20px;line-height:21px;background:#fff;border-right:1px solid #c8c8c8;border-bottom:1px solid #c8c8c8;padding-left:2px;">20.00</div></div>
<div class="clip n" style="left:21px;top:702px;width:512px;height:20px;"><div style="left:0px;top:0;width:64px;height:20px;line-height:21px;background:#fff;border-right:1px solid #c8c8c8;border-bottom:1px solid #c8c8c8;padding-left:2px;letter-spacing:-0.17px;">20 min</div><div style="left:64px;top:0;width:64px;height:20px;line-height:21px;background:#fff;border-right:1px solid #c8c8c8;border-bottom:1px solid #c8c8c8;padding-left:2px;">6.98</div><div style="left:128px;top:0;width:64px;height:20px;line-height:21px;background:#fff;border-right:1px solid #c8c8c8;border-bottom:1px solid #c8c8c8;padding-left:2px;">7.90</div><div style="left:192px;top:0;width:64px;height:20px;line-height:21px;background:#fff;border-right:1px solid #c8c8c8;border-bottom:1px solid #c8c8c8;padding-left:2px;">11.00</div><div style="left:256px;top:0;width:64px;height:20px;line-height:21px;background:#fff;border-right:1px solid #c8c8c8;border-bottom:1px solid #c8c8c8;padding-left:2px;">13.40</div><div style="left:320px;top:0;width:64px;height:20px;line-height:21px;background:#fff;border-right:1px solid #c8c8c8;border-bottom:1px solid #c8c8c8;padding-left:2px;">15.90</div><div style="left:384px;top:0;width:64px;height:20px;line-height:21px;background:#fff;border-right:1px solid #c8c8c8;border-bottom:1px solid #c8c8c8;padding-left:2px;">19.60</div><div style="left:448px;top:0;width:64px;height:20px;line-height:21px;background:#fff;border-right:1px solid #c8c8c8;border-bottom:1px solid #c8c8c8;padding-left:2px;">22.60</div></div>
<div class="clip n" style="left:21px;top:722px;width:512px;height:20px;"><div style="left:0px;top:0;width:64px;height:20px;line-height:21px;background:#fff;border-right:1px solid #c8c8c8;border-bottom:1px solid #c8c8c8;padding-left:2px;letter-spacing:-0.17px;">25 min</div><div style="left:64px;top:0;width:64px;height:20px;line-height:21px;background:#fff;border-right:1px solid #c8c8c8;border-bottom:1px solid #c8c8c8;padding-left:2px;">7.72</div><div style="left:128px;top:0;width:64px;height:20px;line-height:21px;background:#fff;border-right:1px solid #c8c8c8;border-bottom:1px solid #c8c8c8;padding-left:2px;">8.74</div><div style="left:192px;top:0;width:64px;height:20px;line-height:21px;background:#fff;border-right:1px solid #c8c8c8;border-bottom:1px solid #c8c8c8;padding-left:2px;">12.20</div><div style="left:256px;top:0;width:64px;height:20px;line-height:21px;background:#fff;border-right:1px solid #c8c8c8;border-bottom:1px solid #c8c8c8;padding-left:2px;">14.70</div><div style="left:320px;top:0;width:64px;height:20px;line-height:21px;background:#fff;border-right:1px solid #c8c8c8;border-bottom:1px solid #c8c8c8;padding-left:2px;">17.40</div><div style="left:384px;top:0;width:64px;height:20px;line-height:21px;background:#fff;border-right:1px solid #c8c8c8;border-bottom:1px solid #c8c8c8;padding-left:2px;">21.40</div><div style="left:448px;top:0;width:64px;height:20px;line-height:21px;background:#fff;border-right:1px solid #c8c8c8;border-bottom:1px solid #c8c8c8;padding-left:2px;">24.60</div></div>
<div class="clip n" style="left:21px;top:742px;width:512px;height:20px;"><div style="left:0px;top:0;width:64px;height:20px;line-height:21px;background:#fff;border-right:1px solid #c8c8c8;border-bottom:1px solid #c8c8c8;padding-left:2px;letter-spacing:-0.17px;">30 min</div><div style="left:64px;top:0;width:64px;height:20px;line-height:21px;background:#fff;border-right:1px solid #c8c8c8;border-bottom:1px solid #c8c8c8;padding-left:2px;">8.38</div><div style="left:128px;top:0;width:64px;height:20px;line-height:21px;background:#fff;border-right:1px solid #c8c8c8;border-bottom:1px solid #c8c8c8;padding-left:2px;">9.48</div><div style="left:192px;top:0;width:64px;height:20px;line-height:21px;background:#fff;border-right:1px solid #c8c8c8;border-bottom:1px solid #c8c8c8;padding-left:2px;">13.20</div><div style="left:256px;top:0;width:64px;height:20px;line-height:21px;background:#fff;border-right:1px solid #c8c8c8;border-bottom:1px solid #c8c8c8;padding-left:2px;">15.90</div><div style="left:320px;top:0;width:64px;height:20px;line-height:21px;background:#fff;border-right:1px solid #c8c8c8;border-bottom:1px solid #c8c8c8;padding-left:2px;">18.80</div><div style="left:384px;top:0;width:64px;height:20px;line-height:21px;background:#fff;border-right:1px solid #c8c8c8;border-bottom:1px solid #c8c8c8;padding-left:2px;">22.90</div><div style="left:448px;top:0;width:64px;height:20px;line-height:21px;background:#fff;border-right:1px solid #c8c8c8;border-bottom:1px solid #c8c8c8;padding-left:2px;">26.30</div></div>
<div class="clip n" style="left:21px;top:762px;width:512px;height:20px;"><div style="left:0px;top:0;width:64px;height:20px;line-height:21px;background:#fff;border-right:1px solid #c8c8c8;border-bottom:1px solid #c8c8c8;padding-left:2px;letter-spacing:-0.17px;">45 min</div><div style="left:64px;top:0;width:64px;height:20px;line-height:21px;background:#fff;border-right:1px solid #c8c8c8;border-bottom:1px solid #c8c8c8;padding-left:2px;">10.10</div><div style="left:128px;top:0;width:64px;height:20px;line-height:21px;background:#fff;border-right:1px solid #c8c8c8;border-bottom:1px solid #c8c8c8;padding-left:2px;">11.40</div><div style="left:192px;top:0;width:64px;height:20px;line-height:21px;background:#fff;border-right:1px solid #c8c8c8;border-bottom:1px solid #c8c8c8;padding-left:2px;">15.60</div><div style="left:256px;top:0;width:64px;height:20px;line-height:21px;background:#fff;border-right:1px solid #c8c8c8;border-bottom:1px solid #c8c8c8;padding-left:2px;">18.80</div><div style="left:320px;top:0;width:64px;height:20px;line-height:21px;background:#fff;border-right:1px solid #c8c8c8;border-bottom:1px solid #c8c8c8;padding-left:2px;">22.00</div><div style="left:384px;top:0;width:64px;height:20px;line-height:21px;background:#fff;border-right:1px solid #c8c8c8;border-bottom:1px solid #c8c8c8;padding-left:2px;">26.50</div><div style="left:448px;top:0;width:64px;height:20px;line-height:21px;background:#fff;border-right:1px solid #c8c8c8;border-bottom:1px solid #c8c8c8;padding-left:2px;">30.10</div></div>
<div class="clip n" style="left:21px;top:782px;width:512px;height:20px;"><div style="left:0px;top:0;width:64px;height:20px;line-height:21px;background:#fff;border-right:1px solid #c8c8c8;border-bottom:1px solid #c8c8c8;padding-left:2px;letter-spacing:-0.03px;">1 hour</div><div style="left:64px;top:0;width:64px;height:20px;line-height:21px;background:#fff;border-right:1px solid #c8c8c8;border-bottom:1px solid #c8c8c8;padding-left:2px;">11.50</div><div style="left:128px;top:0;width:64px;height:20px;line-height:21px;background:#fff;border-right:1px solid #c8c8c8;border-bottom:1px solid #c8c8c8;padding-left:2px;">13.00</div><div style="left:192px;top:0;width:64px;height:20px;line-height:21px;background:#fff;border-right:1px solid #c8c8c8;border-bottom:1px solid #c8c8c8;padding-left:2px;">17.70</div><div style="left:256px;top:0;width:64px;height:20px;line-height:21px;background:#fff;border-right:1px solid #c8c8c8;border-bottom:1px solid #c8c8c8;padding-left:2px;">21.20</div><div style="left:320px;top:0;width:64px;height:20px;line-height:21px;background:#fff;border-right:1px solid #c8c8c8;border-bottom:1px solid #c8c8c8;padding-left:2px;">24.70</div><div style="left:384px;top:0;width:64px;height:20px;line-height:21px;background:#fff;border-right:1px solid #c8c8c8;border-bottom:1px solid #c8c8c8;padding-left:2px;">29.30</div><div style="left:448px;top:0;width:64px;height:20px;line-height:21px;background:#fff;border-right:1px solid #c8c8c8;border-bottom:1px solid #c8c8c8;padding-left:2px;">33.10</div></div>
<div class="clip n" style="left:21px;top:802px;width:512px;height:20px;"><div style="left:0px;top:0;width:64px;height:20px;line-height:21px;background:#fff;border-right:1px solid #c8c8c8;border-bottom:1px solid #c8c8c8;padding-left:2px;letter-spacing:-0.05px;">1.5 hour</div><div style="left:64px;top:0;width:64px;height:20px;line-height:21px;background:#fff;border-right:1px solid #c8c8c8;border-bottom:1px solid #c8c8c8;padding-left:2px;">14.00</div><div style="left:128px;top:0;width:64px;height:20px;line-height:21px;background:#fff;border-right:1px solid #c8c8c8;border-bottom:1px solid #c8c8c8;padding-left:2px;">15.70</div><div style="left:192px;top:0;width:64px;height:20px;line-height:21px;background:#fff;border-right:1px solid #c8c8c8;border-bottom:1px solid #c8c8c8;padding-left:2px;">21.30</div><div style="left:256px;top:0;width:64px;height:20px;line-height:21px;background:#fff;border-right:1px solid #c8c8c8;border-bottom:1px solid #c8c8c8;padding-left:2px;">25.20</div><div style="left:320px;top:0;width:64px;height:20px;line-height:21px;background:#fff;border-right:1px solid #c8c8c8;border-bottom:1px solid #c8c8c8;padding-left:2px;">29.10</div><div style="left:384px;top:0;width:64px;height:20px;line-height:21px;background:#fff;border-right:1px solid #c8c8c8;border-bottom:1px solid #c8c8c8;padding-left:2px;">34.20</div><div style="left:448px;top:0;width:64px;height:20px;line-height:21px;background:#fff;border-right:1px solid #c8c8c8;border-bottom:1px solid #c8c8c8;padding-left:2px;">38.20</div></div>
<div class="clip n" style="left:21px;top:822px;width:512px;height:20px;"><div style="left:0px;top:0;width:64px;height:20px;line-height:21px;background:#fff;border-right:1px solid #c8c8c8;border-bottom:1px solid #c8c8c8;padding-left:2px;letter-spacing:-0.03px;">2 hour</div><div style="left:64px;top:0;width:64px;height:20px;line-height:21px;background:#fff;border-right:1px solid #c8c8c8;border-bottom:1px solid #c8c8c8;padding-left:2px;">16.10</div><div style="left:128px;top:0;width:64px;height:20px;line-height:21px;background:#fff;border-right:1px solid #c8c8c8;border-bottom:1px solid #c8c8c8;padding-left:2px;">18.10</div><div style="left:192px;top:0;width:64px;height:20px;line-height:21px;background:#fff;border-right:1px solid #c8c8c8;border-bottom:1px solid #c8c8c8;padding-left:2px;">24.40</div><div style="left:256px;top:0;width:64px;height:20px;line-height:21px;background:#fff;border-right:1px solid #c8c8c8;border-bottom:1px solid #c8c8c8;padding-left:2px;">28.80</div><div style="left:320px;top:0;width:64px;height:20px;line-height:21px;background:#fff;border-right:1px solid #c8c8c8;border-bottom:1px solid #c8c8c8;padding-left:2px;">33.10</div><div style="left:384px;top:0;width:64px;height:20px;line-height:21px;background:#fff;border-right:1px solid #c8c8c8;border-bottom:1px solid #c8c8c8;padding-left:2px;">38.50</div><div style="left:448px;top:0;width:64px;height:20px;line-height:21px;background:#fff;border-right:1px solid #c8c8c8;border-bottom:1px solid #c8c8c8;padding-left:2px;">42.80</div></div>
<div class="clip n" style="left:21px;top:842px;width:512px;height:1px;"><div style="left:0px;top:0;width:64px;height:20px;line-height:21px;background:#fff;border-right:1px solid #c8c8c8;border-bottom:1px solid #c8c8c8;padding-left:2px;letter-spacing:-0.03px;">3 hour</div><div style="left:64px;top:0;width:64px;height:20px;line-height:21px;background:#fff;border-right:1px solid #c8c8c8;border-bottom:1px solid #c8c8c8;padding-left:2px;"></div><div style="left:128px;top:0;width:64px;height:20px;line-height:21px;background:#fff;border-right:1px solid #c8c8c8;border-bottom:1px solid #c8c8c8;padding-left:2px;"></div><div style="left:192px;top:0;width:64px;height:20px;line-height:21px;background:#fff;border-right:1px solid #c8c8c8;border-bottom:1px solid #c8c8c8;padding-left:2px;"></div><div style="left:256px;top:0;width:64px;height:20px;line-height:21px;background:#fff;border-right:1px solid #c8c8c8;border-bottom:1px solid #c8c8c8;padding-left:2px;"></div><div style="left:320px;top:0;width:64px;height:20px;line-height:21px;background:#fff;border-right:1px solid #c8c8c8;border-bottom:1px solid #c8c8c8;padding-left:2px;"></div><div style="left:384px;top:0;width:64px;height:20px;line-height:21px;background:#fff;border-right:1px solid #c8c8c8;border-bottom:1px solid #c8c8c8;padding-left:2px;"></div><div style="left:448px;top:0;width:64px;height:20px;line-height:21px;background:#fff;border-right:1px solid #c8c8c8;border-bottom:1px solid #c8c8c8;padding-left:2px;"></div></div>
<div style="left:21px;top:542px;width:63px;height:19px;border:2px solid #000;"></div>
<div class="sbv" style="left:767px;top:542px;width:17px;height:301px;"></div>
<svg style="position:absolute;left:772px;top:548px" width="8" height="5"><path d="M0 4.5L4 0.5L8 4.5Z" fill="#404040"/></svg>
<svg style="position:absolute;left:772px;top:833px" width="8" height="5"><path d="M0 0.5L4 4.5L8 0.5Z" fill="#404040"/></svg>
<div class="thv" style="left:768px;top:560px;width:15px;height:14px;"></div>
<div style="left:15px;top:855px;width:775px;height:23px;border:1px solid #6b99d8;border-bottom:none;background:#cfe0f6;"></div>
<div class="grph" style="left:16px;top:856px;width:773px;height:18px;"></div>
<svg style="position:absolute;left:20px;top:860px" width="9" height="9"><defs><linearGradient id="xg20_860" x1="0" y1="0" x2="1" y2="1"><stop offset="0" stop-color="#ffffff"/><stop offset="1" stop-color="#dde4f3"/></linearGradient></defs><rect x="0.5" y="0.5" width="8" height="8" rx="1.2" fill="url(#xg20_860)" stroke="#a9b7c6"/><path d="M8.5 1.2V7.3Q8.5 8.5 7.3 8.5H1.2" fill="none" stroke="#2f4862" stroke-width="1"/><path d="M2 4.5H7" stroke="#27466a" stroke-width="1.2"/></svg>
<div class="t" style="left:33px;top:857px;height:16px;line-height:16px;letter-spacing:-0.02px;">Temporal Patterns</div>
<div style="left:19px;top:874px;width:70px;height:5px;border:1px solid #a9bcd6;border-bottom:none;border-radius:5px 5px 0 0;background:#dce6f0;"></div>
<div class="sbv" style="left:1543px;top:80px;width:16px;height:797px;"></div>
<svg style="position:absolute;left:1548px;top:86px" width="8" height="5"><path d="M0 4.5L4 0.5L8 4.5Z" fill="#404040"/></svg>
<svg style="position:absolute;left:1548px;top:867px" width="8" height="5"><path d="M0 0.5L4 4.5L8 0.5Z" fill="#404040"/></svg>
<div class="thv" style="left:1544px;top:98px;width:14px;height:478px;"></div>
<div style="left:1547px;top:333px;width:7px;height:1px;background:#6a6a6a;"></div>
<div style="left:1547px;top:335px;width:7px;height:1px;background:#6a6a6a;"></div>
<div style="left:1547px;top:337px;width:7px;height:1px;background:#6a6a6a;"></div>
<div style="left:1547px;top:339px;width:7px;height:1px;background:#6a6a6a;"></div>
<div class="grp" style="left:815px;top:83px;width:724px;height:160px;"></div>
<div class="grph" style="left:816px;top:84px;width:722px;height:18px;"></div>
<svg style="position:absolute;left:820px;top:88px" width="9" height="9"><defs><linearGradient id="xg820_88" x1="0" y1="0" x2="1" y2="1"><stop offset="0" stop-color="#ffffff"/><stop offset="1" stop-color="#dde4f3"/></linearGradient></defs><rect x="0.5" y="0.5" width="8" height="8" rx="1.2" fill="url(#xg820_88)" stroke="#a9b7c6"/><path d="M8.5 1.2V7.3Q8.5 8.5 7.3 8.5H1.2" fill="none" stroke="#2f4862" stroke-width="1"/><path d="M2 4.5H7" stroke="#27466a" stroke-width="1.2"/></svg>
<div class="t" style="left:833px;top:85px;height:16px;line-height:16px;letter-spacing:-0.23px;">Selected Events</div>
<div style="left:821px;top:102px;width:85px;height:21px;border:1px solid #a3b7cc;border-bottom:none;border-radius:5px 5px 0 0;background:linear-gradient(#e6ecf1,#dce6f0);z-index:2;"></div>
<div class="t" style="left:821px;top:103px;width:85px;height:18px;line-height:18px;text-align:center;z-index:3;letter-spacing:-0.18px;">Point TP (2016)</div>
<div style="left:906px;top:104px;width:87px;height:18px;background:#dbe6f1;"></div>
<div class="t" style="left:906px;top:105px;width:87px;height:16px;line-height:16px;text-align:center;letter-spacing:-0.15px;">Areal TP (2016)</div>
<div style="left:993px;top:104px;width:61px;height:18px;background:#dbe6f1;"></div>
<div class="t" style="left:993px;top:105px;width:61px;height:16px;line-height:16px;text-align:center;letter-spacing:-0.34px;">ARR 1987</div>
<div style="left:1054px;top:104px;width:58px;height:18px;background:#dbe6f1;"></div>
<div class="t" style="left:1054px;top:105px;width:58px;height:16px;line-height:16px;text-align:center;letter-spacing:-0.12px;">Durations</div>
<div style="left:819px;top:122px;width:594px;height:92px;border:1px solid #a9bac9;border-radius:2px;background:#dce6f0;"></div>
<div style="left:822px;top:122px;width:83px;height:1px;background:#dce6f0;z-index:3;"></div>
<div style="left:823px;top:126px;width:587px;height:85px;border:1px solid #828790;background:#fff;"></div>
<div class="hdr" style="left:824px;top:127px;width:585px;height:18px;"></div>
<div class="t" style="left:826px;top:128px;height:16px;line-height:16px;letter-spacing:-0.70px;">TP</div>
<div class="sep" style="left:888px;top:128px;width:2px;height:15px;"></div>
<div class="t" style="left:888px;top:128px;width:65px;height:16px;line-height:16px;text-align:center;letter-spacing:-0.18px;">63.2% AEP</div>
<div class="sep" style="left:953px;top:128px;width:2px;height:15px;"></div>
<div class="t" style="left:953px;top:128px;width:65px;height:16px;line-height:16px;text-align:center;letter-spacing:-0.21px;">50% AEP</div>
<div class="sep" style="left:1018px;top:128px;width:2px;height:15px;"></div>
<div class="t" style="left:1018px;top:128px;width:65px;height:16px;line-height:16px;text-align:center;letter-spacing:-0.21px;">20% AEP</div>
<div class="sep" style="left:1083px;top:128px;width:2px;height:15px;"></div>
<div class="t" style="left:1083px;top:128px;width:65px;height:16px;line-height:16px;text-align:center;letter-spacing:-0.21px;">10% AEP</div>
<div class="sep" style="left:1148px;top:128px;width:2px;height:15px;"></div>
<div class="t" style="left:1148px;top:128px;width:65px;height:16px;line-height:16px;text-align:center;letter-spacing:-0.23px;">5% AEP</div>
<div class="sep" style="left:1213px;top:128px;width:2px;height:15px;"></div>
<div class="t" style="left:1213px;top:128px;width:65px;height:16px;line-height:16px;text-align:center;letter-spacing:-0.23px;">2% AEP</div>
<div class="sep" style="left:1278px;top:128px;width:2px;height:15px;"></div>
<div class="t" style="left:1278px;top:128px;width:65px;height:16px;line-height:16px;text-align:center;letter-spacing:-0.23px;">1% AEP</div>
<div class="sep" style="left:1343px;top:128px;width:2px;height:15px;"></div>
<div style="left:889px;top:145px;width:195px;height:16px;background:#add8e6;"></div>
<div class="t" style="left:826px;top:145px;height:16px;line-height:16px;letter-spacing:0.08px;">frequent</div>
<div class="cb" style="left:914px;top:146.25px;width:13px;height:13.25px;"></div>
<div class="cb" style="left:979px;top:146.25px;width:13px;height:13.25px;"></div>
<div class="cb" style="left:1044px;top:146.25px;width:13px;height:13.25px;"></div>
<svg style="position:absolute;left:1046px;top:148px" width="11" height="11"><path d="M1.3 6.2L4.4 9.4L9.4 1.4" fill="none" stroke="#2a2a2a" stroke-width="1.8"/></svg>
<div class="cb" style="left:1109px;top:146.25px;width:13px;height:13.25px;"></div>
<div class="cb" style="left:1174px;top:146.25px;width:13px;height:13.25px;"></div>
<div class="cb" style="left:1239px;top:146.25px;width:13px;height:13.25px;"></div>
<div class="cb" style="left:1304px;top:146.25px;width:13px;height:13.25px;"></div>
<div style="left:1084px;top:161px;width:130px;height:16px;background:#add8e6;"></div>
<div class="t" style="left:826px;top:161px;height:16px;line-height:16px;letter-spacing:0.04px;">intermediate</div>
<div class="cb" style="left:914px;top:162.25px;width:13px;height:13.25px;"></div>
<div class="cb" style="left:979px;top:162.25px;width:13px;height:13.25px;"></div>
<div class="cb" style="left:1044px;top:162.25px;width:13px;height:13.25px;"></div>
<div class="cb" style="left:1109px;top:162.25px;width:13px;height:13.25px;"></div>
<div class="cb" style="left:1174px;top:162.25px;width:13px;height:13.25px;"></div>
<div class="cb" style="left:1239px;top:162.25px;width:13px;height:13.25px;"></div>
<div class="cb" style="left:1304px;top:162.25px;width:13px;height:13.25px;"></div>
<div style="left:1214px;top:177px;width:130px;height:16px;background:#add8e6;"></div>
<div class="t" style="left:826px;top:177px;height:16px;line-height:16px;letter-spacing:0.11px;">rare</div>
<div class="cb" style="left:914px;top:178.25px;width:13px;height:13.25px;"></div>
<div class="cb" style="left:979px;top:178.25px;width:13px;height:13.25px;"></div>
<div class="cb" style="left:1044px;top:178.25px;width:13px;height:13.25px;"></div>
<div class="cb" style="left:1109px;top:178.25px;width:13px;height:13.25px;"></div>
<div class="cb" style="left:1174px;top:178.25px;width:13px;height:13.25px;"></div>
<div class="cb" style="left:1239px;top:178.25px;width:13px;height:13.25px;"></div>
<div class="cb" style="left:1304px;top:178.25px;width:13px;height:13.25px;"></div>
<svg style="position:absolute;left:1306px;top:180px" width="11" height="11"><path d="M1.3 6.2L4.4 9.4L9.4 1.4" fill="none" stroke="#2a2a2a" stroke-width="1.8"/></svg>
<div class="rb" style="left:1421px;top:141px;width:13px;height:13px;"></div>
<div style="left:1425.5px;top:145.5px;width:4px;height:4px;border-radius:50%;background:#222;"></div>
<div class="t sg" style="left:1438px;top:141px;height:16px;line-height:16px;letter-spacing:-0.59px;">IFDs</div>
<div class="rb" style="left:1421px;top:164px;width:13px;height:13px;"></div>
<div class="t sg" style="left:1438px;top:164px;height:16px;line-height:16px;letter-spacing:-0.24px;">Very Frequent</div>
<div class="rb" style="left:1421px;top:187px;width:13px;height:13px;"></div>
<div class="t sg" style="left:1438px;top:187px;height:16px;line-height:16px;letter-spacing:-0.56px;">Rare</div>
<div class="t sg" style="left:824px;top:220px;height:16px;line-height:16px;color:#8d9cb0;letter-spacing:-0.49px;">Custom Events</div>
<div class="inp" style="left:903px;top:218px;width:404px;height:19px;"></div>
<div class="t sg" style="left:1313px;top:220px;height:16px;line-height:16px;color:#8d9cb0;letter-spacing:-0.32px;">Prefix</div>
<div class="inp" style="left:1349px;top:218px;width:64px;height:19px;"></div>
<div class="btn" style="left:1420px;top:212px;width:111px;height:27px;"></div>
<div class="t" style="left:1420px;top:212px;width:97px;height:26px;line-height:26px;font-size:11.5px;letter-spacing:-0.33px;text-align:center;color:#909090;text-shadow:0 1px 0 rgba(255,255,255,0.25);">4) Create Storms</div>
<svg style="position:absolute;left:1521px;top:224px" width="6" height="3"><path d="M0 0H6L3 3Z" fill="#8a8a8a"/></svg>
<div class="grp" style="left:815px;top:249px;width:724px;height:260px;"></div>
<div class="grph" style="left:816px;top:250px;width:722px;height:18px;"></div>
<svg style="position:absolute;left:820px;top:254px" width="9" height="9"><defs><linearGradient id="xg820_254" x1="0" y1="0" x2="1" y2="1"><stop offset="0" stop-color="#ffffff"/><stop offset="1" stop-color="#dde4f3"/></linearGradient></defs><rect x="0.5" y="0.5" width="8" height="8" rx="1.2" fill="url(#xg820_254)" stroke="#a9b7c6"/><path d="M8.5 1.2V7.3Q8.5 8.5 7.3 8.5H1.2" fill="none" stroke="#2f4862" stroke-width="1"/><path d="M2 4.5H7" stroke="#27466a" stroke-width="1.2"/></svg>
<div class="t" style="left:833px;top:251px;height:16px;line-height:16px;letter-spacing:-0.13px;">Areal Reduction Factors</div>
<div style="left:818px;top:268px;width:42px;height:21px;border:1px solid #a3b7cc;border-bottom:none;border-radius:5px 5px 0 0;background:linear-gradient(#e6ecf1,#dce6f0);z-index:2;"></div>
<div class="t" style="left:818px;top:269px;width:42px;height:18px;line-height:18px;text-align:center;z-index:3;letter-spacing:-0.70px;">ARFs</div>
<div style="left:860px;top:270px;width:42px;height:18px;background:#dbe6f1;"></div>
<div class="t" style="left:860px;top:271px;width:42px;height:16px;line-height:16px;text-align:center;letter-spacing:0.02px;">Chart</div>
<div style="left:816px;top:288px;width:721px;height:219px;border:1px solid #a9bac9;border-radius:2px;background:#dce6f0;"></div>
<div style="left:820px;top:288px;width:39px;height:1px;background:#dce6f0;z-index:3;"></div>
<div class="t sg" style="left:1381px;top:269px;height:16px;line-height:16px;letter-spacing:-0.49px;">Area (km2)</div>
<div class="inp" style="left:1441px;top:268px;width:91px;height:19px;"><div style="left:2px;top:0;line-height:17px;color:#8a8a8a;">40.31</div></div>
<div style="left:820px;top:292px;width:714px;height:211px;border:1px solid #828790;background:#fff;"></div>
<div class="hdr" style="left:821px;top:293px;width:696px;height:18px;"></div>
<div class="t" style="left:821.5px;top:294px;height:17px;line-height:17px;letter-spacing:-0.07px;">Duration</div>
<div class="sep" style="left:877px;top:294px;width:2px;height:15px;"></div>
<div class="t" style="left:879.5px;top:294px;height:17px;line-height:17px;letter-spacing:-0.21px;">50% AEP</div>
<div class="sep" style="left:932px;top:294px;width:2px;height:15px;"></div>
<div class="t" style="left:934.5px;top:294px;height:17px;line-height:17px;letter-spacing:-0.21px;">20% AEP</div>
<div class="sep" style="left:987px;top:294px;width:2px;height:15px;"></div>
<div class="t" style="left:989.5px;top:294px;height:17px;line-height:17px;letter-spacing:-0.21px;">10% AEP</div>
<div class="sep" style="left:1042px;top:294px;width:2px;height:15px;"></div>
<div class="t" style="left:1044.5px;top:294px;height:17px;line-height:17px;letter-spacing:-0.23px;">5% AEP</div>
<div class="sep" style="left:1091px;top:294px;width:2px;height:15px;"></div>
<div class="t" style="left:1093.5px;top:294px;height:17px;line-height:17px;letter-spacing:-0.23px;">2% AEP</div>
<div class="sep" style="left:1140px;top:294px;width:2px;height:15px;"></div>
<div class="t" style="left:1142.5px;top:294px;height:17px;line-height:17px;letter-spacing:-0.23px;">1% AEP</div>
<div class="sep" style="left:1189px;top:294px;width:2px;height:15px;"></div>
<div class="t" style="left:1191.5px;top:294px;height:17px;line-height:17px;letter-spacing:-0.19px;">0.5% AEP</div>
<div class="sep" style="left:1248px;top:294px;width:2px;height:15px;"></div>
<div class="t" style="left:1250.5px;top:294px;height:17px;line-height:17px;letter-spacing:-0.19px;">0.2% AEP</div>
<div class="sep" style="left:1307px;top:294px;width:2px;height:15px;"></div>
<div class="t" style="left:1309.5px;top:294px;height:17px;line-height:17px;letter-spacing:-0.19px;">0.1% AEP</div>
<div class="sep" style="left:1366px;top:294px;width:2px;height:15px;"></div>
<div class="t" style="left:1368.5px;top:294px;height:17px;line-height:17px;letter-spacing:-0.18px;">0.05% AEP</div>
<div class="sep" style="left:1430px;top:294px;width:2px;height:15px;"></div>
<div class="t" style="left:1432.5px;top:294px;height:17px;line-height:17px;letter-spacing:-0.04px;">ARR87&lt;&gt;Zone5</div>
<div class="clip n" style="left:820px;top:311px;width:697px;height:16px;"><div style="left:3px;top:0;height:16px;line-height:16px;letter-spacing:-0.18px;">1 min</div><div style="left:58px;top:0;width:52px;height:16px;line-height:16px;text-align:right;">0.2356</div><div style="left:113px;top:0;width:52px;height:16px;line-height:16px;text-align:right;">0.2293</div><div style="left:168px;top:0;width:52px;height:16px;line-height:16px;text-align:right;">0.2246</div><div style="left:223px;top:0;width:46px;height:16px;line-height:16px;text-align:right;">0.2198</div><div style="left:272px;top:0;width:46px;height:16px;line-height:16px;text-align:right;">0.2135</div><div style="left:321px;top:0;width:46px;height:16px;line-height:16px;text-align:right;">0.2088</div><div style="left:370px;top:0;width:56px;height:16px;line-height:16px;text-align:right;">0.204</div><div style="left:429px;top:0;width:56px;height:16px;line-height:16px;text-align:right;">0.1978</div><div style="left:488px;top:0;width:56px;height:16px;line-height:16px;text-align:right;">0.193</div><div style="left:547px;top:0;width:61px;height:16px;line-height:16px;text-align:right;">0.1883</div><div style="left:611px;top:0;width:86px;height:16px;line-height:16px;text-align:right;color:#f5141e;">0.9044</div></div>
<div class="clip n" style="left:820px;top:327px;width:697px;height:16px;"><div style="left:3px;top:0;height:16px;line-height:16px;letter-spacing:-0.18px;">2 min</div><div style="left:58px;top:0;width:52px;height:16px;line-height:16px;text-align:right;">0.4339</div><div style="left:113px;top:0;width:52px;height:16px;line-height:16px;text-align:right;">0.4274</div><div style="left:168px;top:0;width:52px;height:16px;line-height:16px;text-align:right;">0.4225</div><div style="left:223px;top:0;width:46px;height:16px;line-height:16px;text-align:right;">0.4176</div><div style="left:272px;top:0;width:46px;height:16px;line-height:16px;text-align:right;">0.4111</div><div style="left:321px;top:0;width:46px;height:16px;line-height:16px;text-align:right;">0.4061</div><div style="left:370px;top:0;width:56px;height:16px;line-height:16px;text-align:right;">0.4012</div><div style="left:429px;top:0;width:56px;height:16px;line-height:16px;text-align:right;">0.3947</div><div style="left:488px;top:0;width:56px;height:16px;line-height:16px;text-align:right;">0.3897</div><div style="left:547px;top:0;width:61px;height:16px;line-height:16px;text-align:right;">0.3848</div><div style="left:611px;top:0;width:86px;height:16px;line-height:16px;text-align:right;color:#f5141e;">0.9044</div></div>
<div class="clip n" style="left:820px;top:343px;width:697px;height:16px;"><div style="left:3px;top:0;height:16px;line-height:16px;letter-spacing:-0.18px;">3 min</div><div style="left:58px;top:0;width:52px;height:16px;line-height:16px;text-align:right;">0.5258</div><div style="left:113px;top:0;width:52px;height:16px;line-height:16px;text-align:right;">0.5191</div><div style="left:168px;top:0;width:52px;height:16px;line-height:16px;text-align:right;">0.514</div><div style="left:223px;top:0;width:46px;height:16px;line-height:16px;text-align:right;">0.509</div><div style="left:272px;top:0;width:46px;height:16px;line-height:16px;text-align:right;">0.5023</div><div style="left:321px;top:0;width:46px;height:16px;line-height:16px;text-align:right;">0.4972</div><div style="left:370px;top:0;width:56px;height:16px;line-height:16px;text-align:right;">0.4922</div><div style="left:429px;top:0;width:56px;height:16px;line-height:16px;text-align:right;">0.4855</div><div style="left:488px;top:0;width:56px;height:16px;line-height:16px;text-align:right;">0.4804</div><div style="left:547px;top:0;width:61px;height:16px;line-height:16px;text-align:right;">0.4754</div><div style="left:611px;top:0;width:86px;height:16px;line-height:16px;text-align:right;color:#f5141e;">0.9044</div></div>
<div class="clip n" style="left:820px;top:359px;width:697px;height:16px;"><div style="left:3px;top:0;height:16px;line-height:16px;letter-spacing:-0.18px;">4 min</div><div style="left:58px;top:0;width:52px;height:16px;line-height:16px;text-align:right;">0.582</div><div style="left:113px;top:0;width:52px;height:16px;line-height:16px;text-align:right;">0.5751</div><div style="left:168px;top:0;width:52px;height:16px;line-height:16px;text-align:right;">0.57</div><div style="left:223px;top:0;width:46px;height:16px;line-height:16px;text-align:right;">0.5648</div><div style="left:272px;top:0;width:46px;height:16px;line-height:16px;text-align:right;">0.558</div><div style="left:321px;top:0;width:46px;height:16px;line-height:16px;text-align:right;">0.5528</div><div style="left:370px;top:0;width:56px;height:16px;line-height:16px;text-align:right;">0.5477</div><div style="left:429px;top:0;width:56px;height:16px;line-height:16px;text-align:right;">0.5409</div><div style="left:488px;top:0;width:56px;height:16px;line-height:16px;text-align:right;">0.5357</div><div style="left:547px;top:0;width:61px;height:16px;line-height:16px;text-align:right;">0.5305</div><div style="left:611px;top:0;width:86px;height:16px;line-height:16px;text-align:right;color:#f5141e;">0.9044</div></div>
<div class="clip n" style="left:820px;top:375px;width:697px;height:16px;"><div style="left:3px;top:0;height:16px;line-height:16px;letter-spacing:-0.18px;">5 min</div><div style="left:58px;top:0;width:52px;height:16px;line-height:16px;text-align:right;">0.6211</div><div style="left:113px;top:0;width:52px;height:16px;line-height:16px;text-align:right;">0.6141</div><div style="left:168px;top:0;width:52px;height:16px;line-height:16px;text-align:right;">0.6089</div><div style="left:223px;top:0;width:46px;height:16px;line-height:16px;text-align:right;">0.6036</div><div style="left:272px;top:0;width:46px;height:16px;line-height:16px;text-align:right;">0.5967</div><div style="left:321px;top:0;width:46px;height:16px;line-height:16px;text-align:right;">0.5914</div><div style="left:370px;top:0;width:56px;height:16px;line-height:16px;text-align:right;">0.5862</div><div style="left:429px;top:0;width:56px;height:16px;line-height:16px;text-align:right;">0.5792</div><div style="left:488px;top:0;width:56px;height:16px;line-height:16px;text-align:right;">0.574</div><div style="left:547px;top:0;width:61px;height:16px;line-height:16px;text-align:right;">0.5687</div><div style="left:611px;top:0;width:86px;height:16px;line-height:16px;text-align:right;color:#f5141e;">0.9044</div></div>
<div class="clip n" style="left:820px;top:391px;width:697px;height:16px;"><div style="left:3px;top:0;height:16px;line-height:16px;letter-spacing:-0.17px;">10 min</div><div style="left:58px;top:0;width:52px;height:16px;line-height:16px;text-align:right;">0.7213</div><div style="left:113px;top:0;width:52px;height:16px;line-height:16px;text-align:right;">0.7139</div><div style="left:168px;top:0;width:52px;height:16px;line-height:16px;text-align:right;">0.7082</div><div style="left:223px;top:0;width:46px;height:16px;line-height:16px;text-align:right;">0.7026</div><div style="left:272px;top:0;width:46px;height:16px;line-height:16px;text-align:right;">0.6952</div><div style="left:321px;top:0;width:46px;height:16px;line-height:16px;text-align:right;">0.6896</div><div style="left:370px;top:0;width:56px;height:16px;line-height:16px;text-align:right;">0.6839</div><div style="left:429px;top:0;width:56px;height:16px;line-height:16px;text-align:right;">0.6765</div><div style="left:488px;top:0;width:56px;height:16px;line-height:16px;text-align:right;">0.6709</div><div style="left:547px;top:0;width:61px;height:16px;line-height:16px;text-align:right;">0.6652</div><div style="left:611px;top:0;width:86px;height:16px;line-height:16px;text-align:right;color:#f5141e;">0.9044</div></div>
<div class="clip n" style="left:820px;top:407px;width:697px;height:16px;"><div style="left:3px;top:0;height:16px;line-height:16px;letter-spacing:-0.17px;">15 min</div><div style="left:58px;top:0;width:52px;height:16px;line-height:16px;text-align:right;">0.7675</div><div style="left:113px;top:0;width:52px;height:16px;line-height:16px;text-align:right;">0.7597</div><div style="left:168px;top:0;width:52px;height:16px;line-height:16px;text-align:right;">0.7537</div><div style="left:223px;top:0;width:46px;height:16px;line-height:16px;text-align:right;">0.7478</div><div style="left:272px;top:0;width:46px;height:16px;line-height:16px;text-align:right;">0.7399</div><div style="left:321px;top:0;width:46px;height:16px;line-height:16px;text-align:right;">0.734</div><div style="left:370px;top:0;width:56px;height:16px;line-height:16px;text-align:right;">0.7281</div><div style="left:429px;top:0;width:56px;height:16px;line-height:16px;text-align:right;">0.7202</div><div style="left:488px;top:0;width:56px;height:16px;line-height:16px;text-align:right;">0.7143</div><div style="left:547px;top:0;width:61px;height:16px;line-height:16px;text-align:right;">0.7083</div><div style="left:611px;top:0;width:86px;height:16px;line-height:16px;text-align:right;color:#f5141e;">0.9044</div></div>
<div class="clip n" style="left:820px;top:423px;width:697px;height:16px;"><div style="left:3px;top:0;height:16px;line-height:16px;letter-spacing:-0.17px;">20 min</div><div style="left:58px;top:0;width:52px;height:16px;line-height:16px;text-align:right;">0.7957</div><div style="left:113px;top:0;width:52px;height:16px;line-height:16px;text-align:right;">0.7875</div><div style="left:168px;top:0;width:52px;height:16px;line-height:16px;text-align:right;">0.7813</div><div style="left:223px;top:0;width:46px;height:16px;line-height:16px;text-align:right;">0.7751</div><div style="left:272px;top:0;width:46px;height:16px;line-height:16px;text-align:right;">0.7668</div><div style="left:321px;top:0;width:46px;height:16px;line-height:16px;text-align:right;">0.7606</div><div style="left:370px;top:0;width:56px;height:16px;line-height:16px;text-align:right;">0.7544</div><div style="left:429px;top:0;width:56px;height:16px;line-height:16px;text-align:right;">0.7461</div><div style="left:488px;top:0;width:56px;height:16px;line-height:16px;text-align:right;">0.7399</div><div style="left:547px;top:0;width:61px;height:16px;line-height:16px;text-align:right;">0.7337</div><div style="left:611px;top:0;width:86px;height:16px;line-height:16px;text-align:right;color:#f5141e;">0.9044</div></div>
<div class="clip n" style="left:820px;top:439px;width:697px;height:16px;"><div style="left:3px;top:0;height:16px;line-height:16px;letter-spacing:-0.17px;">25 min</div><div style="left:58px;top:0;width:52px;height:16px;line-height:16px;text-align:right;">0.8153</div><div style="left:113px;top:0;width:52px;height:16px;line-height:16px;text-align:right;">0.8067</div><div style="left:168px;top:0;width:52px;height:16px;line-height:16px;text-align:right;">0.8002</div><div style="left:223px;top:0;width:46px;height:16px;line-height:16px;text-align:right;">0.7937</div><div style="left:272px;top:0;width:46px;height:16px;line-height:16px;text-align:right;">0.7851</div><div style="left:321px;top:0;width:46px;height:16px;line-height:16px;text-align:right;">0.7786</div><div style="left:370px;top:0;width:56px;height:16px;line-height:16px;text-align:right;">0.7721</div><div style="left:429px;top:0;width:56px;height:16px;line-height:16px;text-align:right;">0.7635</div><div style="left:488px;top:0;width:56px;height:16px;line-height:16px;text-align:right;">0.757</div><div style="left:547px;top:0;width:61px;height:16px;line-height:16px;text-align:right;">0.7505</div><div style="left:611px;top:0;width:86px;height:16px;line-height:16px;text-align:right;color:#f5141e;">0.9044</div></div>
<div class="clip n" style="left:820px;top:455px;width:697px;height:16px;"><div style="left:3px;top:0;height:16px;line-height:16px;letter-spacing:-0.17px;">30 min</div><div style="left:58px;top:0;width:52px;height:16px;line-height:16px;text-align:right;">0.83</div><div style="left:113px;top:0;width:52px;height:16px;line-height:16px;text-align:right;">0.821</div><div style="left:168px;top:0;width:52px;height:16px;line-height:16px;text-align:right;">0.8143</div><div style="left:223px;top:0;width:46px;height:16px;line-height:16px;text-align:right;">0.8075</div><div style="left:272px;top:0;width:46px;height:16px;line-height:16px;text-align:right;">0.7985</div><div style="left:321px;top:0;width:46px;height:16px;line-height:16px;text-align:right;">0.7917</div><div style="left:370px;top:0;width:56px;height:16px;line-height:16px;text-align:right;">0.7849</div><div style="left:429px;top:0;width:56px;height:16px;line-height:16px;text-align:right;">0.776</div><div style="left:488px;top:0;width:56px;height:16px;line-height:16px;text-align:right;">0.7692</div><div style="left:547px;top:0;width:61px;height:16px;line-height:16px;text-align:right;">0.7624</div><div style="left:611px;top:0;width:86px;height:16px;line-height:16px;text-align:right;">0.9044</div></div>
<div class="clip n" style="left:820px;top:471px;width:697px;height:16px;"><div style="left:3px;top:0;height:16px;line-height:16px;letter-spacing:-0.17px;">45 min</div><div style="left:58px;top:0;width:52px;height:16px;line-height:16px;text-align:right;">0.8587</div><div style="left:113px;top:0;width:52px;height:16px;line-height:16px;text-align:right;">0.8487</div><div style="left:168px;top:0;width:52px;height:16px;line-height:16px;text-align:right;">0.8411</div><div style="left:223px;top:0;width:46px;height:16px;line-height:16px;text-align:right;">0.8335</div><div style="left:272px;top:0;width:46px;height:16px;line-height:16px;text-align:right;">0.8235</div><div style="left:321px;top:0;width:46px;height:16px;line-height:16px;text-align:right;">0.8159</div><div style="left:370px;top:0;width:56px;height:16px;line-height:16px;text-align:right;">0.8083</div><div style="left:429px;top:0;width:56px;height:16px;line-height:16px;text-align:right;">0.7983</div><div style="left:488px;top:0;width:56px;height:16px;line-height:16px;text-align:right;">0.7907</div><div style="left:547px;top:0;width:61px;height:16px;line-height:16px;text-align:right;">0.7832</div><div style="left:611px;top:0;width:86px;height:16px;line-height:16px;text-align:right;">0.9202</div></div>
<div class="sbv" style="left:1517px;top:292px;width:16px;height:196px;"></div>
<svg style="position:absolute;left:1522px;top:298px" width="8" height="5"><path d="M0 4.5L4 0.5L8 4.5Z" fill="#404040"/></svg>
<svg style="position:absolute;left:1522px;top:478px" width="8" height="5"><path d="M0 0.5L4 4.5L8 0.5Z" fill="#404040"/></svg>
<div class="thv" style="left:1518px;top:311px;width:14px;height:56px;"></div>
<div style="left:1521px;top:335px;width:7px;height:1px;background:#6a6a6a;"></div>
<div style="left:1521px;top:337px;width:7px;height:1px;background:#6a6a6a;"></div>
<div style="left:1521px;top:339px;width:7px;height:1px;background:#6a6a6a;"></div>
<div style="left:1521px;top:341px;width:7px;height:1px;background:#6a6a6a;"></div>
<div class="sbh" style="left:821px;top:487px;width:696px;height:15px;"></div>
<svg style="position:absolute;left:826px;top:491px" width="5" height="8"><path d="M4.5 0L0.5 4L4.5 8Z" fill="#404040"/></svg>
<svg style="position:absolute;left:1505px;top:491px" width="5" height="8"><path d="M0.5 0L4.5 4L0.5 8Z" fill="#404040"/></svg>
<div class="thh" style="left:839px;top:487px;width:590px;height:15px;"></div>
<div style="left:1130px;top:492px;width:1px;height:6px;background:#6a6a6a;"></div>
<div style="left:1132px;top:492px;width:1px;height:6px;background:#6a6a6a;"></div>
<div style="left:1134px;top:492px;width:1px;height:6px;background:#6a6a6a;"></div>
<div style="left:1136px;top:492px;width:1px;height:6px;background:#6a6a6a;"></div>
<div style="left:1517px;top:487px;width:16px;height:15px;background:#f0f0f0;"></div>
<div class="grp" style="left:815px;top:515px;width:724px;height:200px;"></div>
<div class="grph" style="left:816px;top:516px;width:722px;height:18px;"></div>
<svg style="position:absolute;left:820px;top:520px" width="9" height="9"><defs><linearGradient id="xg820_520" x1="0" y1="0" x2="1" y2="1"><stop offset="0" stop-color="#ffffff"/><stop offset="1" stop-color="#dde4f3"/></linearGradient></defs><rect x="0.5" y="0.5" width="8" height="8" rx="1.2" fill="url(#xg820_520)" stroke="#a9b7c6"/><path d="M8.5 1.2V7.3Q8.5 8.5 7.3 8.5H1.2" fill="none" stroke="#2f4862" stroke-width="1"/><path d="M2 4.5H7" stroke="#27466a" stroke-width="1.2"/></svg>
<div class="t" style="left:833px;top:517px;height:16px;line-height:16px;letter-spacing:-0.21px;">Storm Burst Losses (Global Initial Loss - Median Preburst)</div>
<div style="left:818px;top:534px;width:67px;height:21px;border:1px solid #a3b7cc;border-bottom:none;border-radius:5px 5px 0 0;background:linear-gradient(#e6ecf1,#dce6f0);z-index:2;"></div>
<div class="t" style="left:818px;top:535px;width:67px;height:18px;line-height:18px;text-align:center;z-index:3;letter-spacing:-0.40px;">Loss Values</div>
<div style="left:885px;top:536px;width:42px;height:18px;background:#dbe6f1;"></div>
<div class="t" style="left:885px;top:537px;width:42px;height:16px;line-height:16px;text-align:center;letter-spacing:0.02px;">Chart</div>
<div style="left:816px;top:554px;width:721px;height:159px;border:1px solid #a9bac9;border-radius:2px;background:#dce6f0;"></div>
<div style="left:820px;top:554px;width:64px;height:1px;background:#dce6f0;z-index:3;"></div>
<div style="left:820px;top:558px;width:714px;height:152px;border:1px solid #828790;background:#fff;"></div>
<div class="hdr" style="left:821px;top:559px;width:696px;height:18px;"></div>
<div class="t" style="left:821.5px;top:560px;height:17px;line-height:17px;letter-spacing:-0.07px;">Duration</div>
<div class="sep" style="left:900px;top:560px;width:2px;height:15px;"></div>
<div class="t" style="left:902.5px;top:560px;height:17px;line-height:17px;letter-spacing:-0.21px;">50% AEP</div>
<div class="sep" style="left:980px;top:560px;width:2px;height:15px;"></div>
<div class="t" style="left:982.5px;top:560px;height:17px;line-height:17px;letter-spacing:-0.21px;">20% AEP</div>
<div class="sep" style="left:1060px;top:560px;width:2px;height:15px;"></div>
<div class="t" style="left:1062.5px;top:560px;height:17px;line-height:17px;letter-spacing:-0.21px;">10% AEP</div>
<div class="sep" style="left:1140px;top:560px;width:2px;height:15px;"></div>
<div class="t" style="left:1142.5px;top:560px;height:17px;line-height:17px;letter-spacing:-0.23px;">5% AEP</div>
<div class="sep" style="left:1220px;top:560px;width:2px;height:15px;"></div>
<div class="t" style="left:1222.5px;top:560px;height:17px;line-height:17px;letter-spacing:-0.23px;">2% AEP</div>
<div class="sep" style="left:1300px;top:560px;width:2px;height:15px;"></div>
<div class="t" style="left:1302.5px;top:560px;height:17px;line-height:17px;letter-spacing:-0.23px;">1% AEP</div>
<div class="sep" style="left:1379px;top:559px;width:2px;height:16px;"></div>
<svg style="position:absolute;left:885px;top:564px" width="9" height="5"><path d="M0 5L4.5 0L9 5Z" fill="#555"/></svg>
<div class="clip n" style="left:820px;top:577px;width:697px;height:16px;"><div style="left:3px;top:0;height:16px;line-height:16px;letter-spacing:-0.17px;">10 min</div><div style="left:81px;top:0;width:78px;height:16px;line-height:16px;text-align:right;">23</div><div style="left:161px;top:0;width:78px;height:16px;line-height:16px;text-align:right;">21.3</div><div style="left:241px;top:0;width:78px;height:16px;line-height:16px;text-align:right;">20.1</div><div style="left:321px;top:0;width:78px;height:16px;line-height:16px;text-align:right;">19</div><div style="left:401px;top:0;width:78px;height:16px;line-height:16px;text-align:right;">21.1</div><div style="left:481px;top:0;width:78px;height:16px;line-height:16px;text-align:right;">22.7</div></div>
<div class="clip n" style="left:820px;top:593px;width:697px;height:16px;"><div style="left:3px;top:0;height:16px;line-height:16px;letter-spacing:-0.17px;">15 min</div><div style="left:81px;top:0;width:78px;height:16px;line-height:16px;text-align:right;">23</div><div style="left:161px;top:0;width:78px;height:16px;line-height:16px;text-align:right;">21.3</div><div style="left:241px;top:0;width:78px;height:16px;line-height:16px;text-align:right;">20.1</div><div style="left:321px;top:0;width:78px;height:16px;line-height:16px;text-align:right;">19</div><div style="left:401px;top:0;width:78px;height:16px;line-height:16px;text-align:right;">21.1</div><div style="left:481px;top:0;width:78px;height:16px;line-height:16px;text-align:right;">22.7</div></div>
<div class="clip n" style="left:820px;top:609px;width:697px;height:16px;"><div style="left:3px;top:0;height:16px;line-height:16px;letter-spacing:-0.17px;">20 min</div><div style="left:81px;top:0;width:78px;height:16px;line-height:16px;text-align:right;">23</div><div style="left:161px;top:0;width:78px;height:16px;line-height:16px;text-align:right;">21.3</div><div style="left:241px;top:0;width:78px;height:16px;line-height:16px;text-align:right;">20.1</div><div style="left:321px;top:0;width:78px;height:16px;line-height:16px;text-align:right;">19</div><div style="left:401px;top:0;width:78px;height:16px;line-height:16px;text-align:right;">21.1</div><div style="left:481px;top:0;width:78px;height:16px;line-height:16px;text-align:right;">22.7</div></div>
<div class="clip n" style="left:820px;top:625px;width:697px;height:16px;"><div style="left:3px;top:0;height:16px;line-height:16px;letter-spacing:-0.17px;">25 min</div><div style="left:81px;top:0;width:78px;height:16px;line-height:16px;text-align:right;">23</div><div style="left:161px;top:0;width:78px;height:16px;line-height:16px;text-align:right;">21.3</div><div style="left:241px;top:0;width:78px;height:16px;line-height:16px;text-align:right;">20.1</div><div style="left:321px;top:0;width:78px;height:16px;line-height:16px;text-align:right;">19</div><div style="left:401px;top:0;width:78px;height:16px;line-height:16px;text-align:right;">21.1</div><div style="left:481px;top:0;width:78px;height:16px;line-height:16px;text-align:right;">22.7</div></div>
<div class="clip n" style="left:820px;top:641px;width:697px;height:16px;"><div style="left:3px;top:0;height:16px;line-height:16px;letter-spacing:-0.17px;">30 min</div><div style="left:81px;top:0;width:78px;height:16px;line-height:16px;text-align:right;">23</div><div style="left:161px;top:0;width:78px;height:16px;line-height:16px;text-align:right;">21.3</div><div style="left:241px;top:0;width:78px;height:16px;line-height:16px;text-align:right;">20.1</div><div style="left:321px;top:0;width:78px;height:16px;line-height:16px;text-align:right;">19</div><div style="left:401px;top:0;width:78px;height:16px;line-height:16px;text-align:right;">21.1</div><div style="left:481px;top:0;width:78px;height:16px;line-height:16px;text-align:right;">22.7</div></div>
<div class="clip n" style="left:820px;top:657px;width:697px;height:16px;"><div style="left:3px;top:0;height:16px;line-height:16px;letter-spacing:-0.17px;">45 min</div><div style="left:81px;top:0;width:78px;height:16px;line-height:16px;text-align:right;">23</div><div style="left:161px;top:0;width:78px;height:16px;line-height:16px;text-align:right;">21.3</div><div style="left:241px;top:0;width:78px;height:16px;line-height:16px;text-align:right;">20.1</div><div style="left:321px;top:0;width:78px;height:16px;line-height:16px;text-align:right;">19</div><div style="left:401px;top:0;width:78px;height:16px;line-height:16px;text-align:right;">21.1</div><div style="left:481px;top:0;width:78px;height:16px;line-height:16px;text-align:right;">22.7</div></div>
<div class="clip n" style="left:820px;top:673px;width:697px;height:16px;"><div style="left:3px;top:0;height:16px;line-height:16px;letter-spacing:-0.03px;">1 hour</div><div style="left:81px;top:0;width:78px;height:16px;line-height:16px;text-align:right;">23</div><div style="left:161px;top:0;width:78px;height:16px;line-height:16px;text-align:right;">21.3</div><div style="left:241px;top:0;width:78px;height:16px;line-height:16px;text-align:right;">20.1</div><div style="left:321px;top:0;width:78px;height:16px;line-height:16px;text-align:right;">19</div><div style="left:401px;top:0;width:78px;height:16px;line-height:16px;text-align:right;">21.1</div><div style="left:481px;top:0;width:78px;height:16px;line-height:16px;text-align:right;">22.7</div></div>
<div class="clip n" style="left:820px;top:689px;width:697px;height:16px;"><div style="left:3px;top:0;height:16px;line-height:16px;letter-spacing:-0.05px;">1.50 hour</div><div style="left:81px;top:0;width:78px;height:16px;line-height:16px;text-align:right;">22.7</div><div style="left:161px;top:0;width:78px;height:16px;line-height:16px;text-align:right;">22.3</div><div style="left:241px;top:0;width:78px;height:16px;line-height:16px;text-align:right;">22</div><div style="left:321px;top:0;width:78px;height:16px;line-height:16px;text-align:right;">21.7</div><div style="left:401px;top:0;width:78px;height:16px;line-height:16px;text-align:right;">21.1</div><div style="left:481px;top:0;width:78px;height:16px;line-height:16px;text-align:right;">20.7</div></div>
<div class="clip n" style="left:820px;top:705px;width:697px;height:4px;"><div style="left:3px;top:0;height:16px;line-height:16px;letter-spacing:-0.03px;">2 hour</div><div style="left:81px;top:0;width:78px;height:16px;line-height:16px;text-align:right;">22.7</div><div style="left:161px;top:0;width:78px;height:16px;line-height:16px;text-align:right;">22.3</div><div style="left:241px;top:0;width:78px;height:16px;line-height:16px;text-align:right;">22</div><div style="left:321px;top:0;width:78px;height:16px;line-height:16px;text-align:right;">21.7</div><div style="left:401px;top:0;width:78px;height:16px;line-height:16px;text-align:right;">21.1</div><div style="left:481px;top:0;width:78px;height:16px;line-height:16px;text-align:right;">20.7</div></div>
<div class="sbv" style="left:1517px;top:559px;width:16px;height:150px;"></div>
<svg style="position:absolute;left:1522px;top:565px" width="8" height="5"><path d="M0 4.5L4 0.5L8 4.5Z" fill="#404040"/></svg>
<svg style="position:absolute;left:1522px;top:699px" width="8" height="5"><path d="M0 0.5L4 4.5L8 0.5Z" fill="#404040"/></svg>
<div class="thv" style="left:1518px;top:577px;width:14px;height:56px;"></div>
<div style="left:1521px;top:601px;width:7px;height:1px;background:#6a6a6a;"></div>
<div style="left:1521px;top:603px;width:7px;height:1px;background:#6a6a6a;"></div>
<div style="left:1521px;top:605px;width:7px;height:1px;background:#6a6a6a;"></div>
<div style="left:1521px;top:607px;width:7px;height:1px;background:#6a6a6a;"></div>
<div class="grp" style="left:815px;top:721px;width:724px;height:18px;"></div>
<div class="grph" style="left:816px;top:722px;width:722px;height:16px;"></div>
<svg style="position:absolute;left:820px;top:726px" width="9" height="9"><defs><linearGradient id="xg820_726" x1="0" y1="0" x2="1" y2="1"><stop offset="0" stop-color="#ffffff"/><stop offset="1" stop-color="#dde4f3"/></linearGradient></defs><rect x="0.5" y="0.5" width="8" height="8" rx="1.2" fill="url(#xg820_726)" stroke="#a9b7c6"/><path d="M8.5 1.2V7.3Q8.5 8.5 7.3 8.5H1.2" fill="none" stroke="#2f4862" stroke-width="1"/><path d="M2 4.5H7M4.5 2V7" stroke="#27466a" stroke-width="1.2"/></svg>
<div class="t" style="left:833px;top:723px;height:16px;line-height:16px;letter-spacing:-0.02px;">Routing Increments</div>
<div style="left:815px;top:745px;width:724px;height:133px;border:1px solid #6b99d8;border-bottom:none;background:#cfe0f6;"></div>
<div class="grph" style="left:816px;top:746px;width:722px;height:18px;"></div>
<svg style="position:absolute;left:820px;top:750px" width="9" height="9"><defs><linearGradient id="xg820_750" x1="0" y1="0" x2="1" y2="1"><stop offset="0" stop-color="#ffffff"/><stop offset="1" stop-color="#dde4f3"/></linearGradient></defs><rect x="0.5" y="0.5" width="8" height="8" rx="1.2" fill="url(#xg820_750)" stroke="#a9b7c6"/><path d="M8.5 1.2V7.3Q8.5 8.5 7.3 8.5H1.2" fill="none" stroke="#2f4862" stroke-width="1"/><path d="M2 4.5H7" stroke="#27466a" stroke-width="1.2"/></svg>
<div class="t" style="left:833px;top:747px;height:16px;line-height:16px;letter-spacing:-0.05px;">Storms (410)</div>
<div style="left:816px;top:764px;width:722px;height:114px;border:1px solid #828790;border-bottom:none;background:#fff;"></div>
<div class="hdr" style="left:817px;top:765px;width:703px;height:18px;"></div>
<div class="clip" style="left:818px;top:765px;width:78px;height:18px;line-height:19px;letter-spacing:-0.15px;">Event ID</div>
<div class="sep" style="left:896px;top:766px;width:2px;height:15px;"></div>
<div class="clip" style="left:898px;top:765px;width:78px;height:18px;line-height:19px;letter-spacing:-0.23px;">Event</div>
<div class="sep" style="left:976px;top:766px;width:2px;height:15px;"></div>
<div class="clip" style="left:978px;top:765px;width:78px;height:18px;line-height:19px;letter-spacing:-0.05px;">Duration (min)</div>
<div class="sep" style="left:1056px;top:766px;width:2px;height:15px;"></div>
<div class="clip" style="left:1058px;top:765px;width:78px;height:18px;line-height:19px;letter-spacing:0.09px;">Duration (text)</div>
<div class="sep" style="left:1136px;top:766px;width:2px;height:15px;"></div>
<div class="clip" style="left:1138px;top:765px;width:78px;height:18px;line-height:19px;letter-spacing:-0.10px;">Timestep</div>
<div class="sep" style="left:1216px;top:766px;width:2px;height:15px;"></div>
<div class="clip" style="left:1218px;top:765px;width:78px;height:18px;line-height:19px;letter-spacing:-0.27px;">Classification</div>
<div class="sep" style="left:1296px;top:766px;width:2px;height:15px;"></div>
<div class="clip" style="left:1298px;top:765px;width:78px;height:18px;line-height:19px;letter-spacing:-0.31px;">Region</div>
<div class="sep" style="left:1376px;top:766px;width:2px;height:15px;"></div>
<div class="clip" style="left:1378px;top:765px;width:78px;height:18px;line-height:19px;letter-spacing:-0.34px;">AEP/ARI</div>
<div class="sep" style="left:1456px;top:766px;width:2px;height:15px;"></div>
<div class="clip" style="left:1458px;top:765px;width:62px;height:18px;line-height:19px;letter-spacing:-0.20px;">IFD Location</div>
<div class="clip n" style="left:817px;top:783px;width:703px;height:16px;"><div class="clip" style="left:2px;top:0;width:78px;height:16px;line-height:16px;letter-spacing:-0.21px;">20%AEP_12...</div><div class="clip" style="left:82px;top:0;width:78px;height:16px;line-height:16px;letter-spacing:-0.21px;">20% AEP</div><div class="clip" style="left:162px;top:0;width:78px;height:16px;line-height:16px;letter-spacing:-0.12px;">120</div><div class="clip" style="left:242px;top:0;width:78px;height:16px;line-height:16px;letter-spacing:-0.10px;">2 hours</div><div class="clip" style="left:322px;top:0;width:78px;height:16px;line-height:16px;">5</div><div class="clip" style="left:402px;top:0;width:78px;height:16px;line-height:16px;letter-spacing:0.08px;">frequent</div><div class="clip" style="left:482px;top:0;width:78px;height:16px;line-height:16px;letter-spacing:-0.18px;">Southern Slo...</div><div class="clip" style="left:562px;top:0;width:78px;height:16px;line-height:16px;letter-spacing:-0.21px;">20% AEP</div><div class="clip" style="left:642px;top:0;width:61px;height:16px;line-height:16px;letter-spacing:-0.14px;">UpperCatch...</div></div>
<div class="clip n" style="left:817px;top:799px;width:703px;height:16px;"><div class="clip" style="left:2px;top:0;width:78px;height:16px;line-height:16px;letter-spacing:-0.21px;">20%AEP_12...</div><div class="clip" style="left:82px;top:0;width:78px;height:16px;line-height:16px;letter-spacing:-0.21px;">20% AEP</div><div class="clip" style="left:162px;top:0;width:78px;height:16px;line-height:16px;letter-spacing:-0.12px;">120</div><div class="clip" style="left:242px;top:0;width:78px;height:16px;line-height:16px;letter-spacing:-0.10px;">2 hours</div><div class="clip" style="left:322px;top:0;width:78px;height:16px;line-height:16px;">5</div><div class="clip" style="left:402px;top:0;width:78px;height:16px;line-height:16px;letter-spacing:0.08px;">frequent</div><div class="clip" style="left:482px;top:0;width:78px;height:16px;line-height:16px;letter-spacing:-0.18px;">Southern Slo...</div><div class="clip" style="left:562px;top:0;width:78px;height:16px;line-height:16px;letter-spacing:-0.21px;">20% AEP</div><div class="clip" style="left:642px;top:0;width:61px;height:16px;line-height:16px;letter-spacing:-0.14px;">UpperCatch...</div></div>
<div class="clip n" style="left:817px;top:815px;width:703px;height:16px;"><div class="clip" style="left:2px;top:0;width:78px;height:16px;line-height:16px;letter-spacing:-0.21px;">20%AEP_12...</div><div class="clip" style="left:82px;top:0;width:78px;height:16px;line-height:16px;letter-spacing:-0.21px;">20% AEP</div><div class="clip" style="left:162px;top:0;width:78px;height:16px;line-height:16px;letter-spacing:-0.12px;">120</div><div class="clip" style="left:242px;top:0;width:78px;height:16px;line-height:16px;letter-spacing:-0.10px;">2 hours</div><div class="clip" style="left:322px;top:0;width:78px;height:16px;line-height:16px;">5</div><div class="clip" style="left:402px;top:0;width:78px;height:16px;line-height:16px;letter-spacing:0.08px;">frequent</div><div class="clip" style="left:482px;top:0;width:78px;height:16px;line-height:16px;letter-spacing:-0.18px;">Southern Slo...</div><div class="clip" style="left:562px;top:0;width:78px;height:16px;line-height:16px;letter-spacing:-0.21px;">20% AEP</div><div class="clip" style="left:642px;top:0;width:61px;height:16px;line-height:16px;letter-spacing:-0.14px;">UpperCatch...</div></div>
<div class="clip n" style="left:817px;top:831px;width:703px;height:16px;"><div class="clip" style="left:2px;top:0;width:78px;height:16px;line-height:16px;letter-spacing:-0.21px;">20%AEP_12...</div><div class="clip" style="left:82px;top:0;width:78px;height:16px;line-height:16px;letter-spacing:-0.21px;">20% AEP</div><div class="clip" style="left:162px;top:0;width:78px;height:16px;line-height:16px;letter-spacing:-0.12px;">120</div><div class="clip" style="left:242px;top:0;width:78px;height:16px;line-height:16px;letter-spacing:-0.10px;">2 hours</div><div class="clip" style="left:322px;top:0;width:78px;height:16px;line-height:16px;">5</div><div class="clip" style="left:402px;top:0;width:78px;height:16px;line-height:16px;letter-spacing:0.08px;">frequent</div><div class="clip" style="left:482px;top:0;width:78px;height:16px;line-height:16px;letter-spacing:-0.18px;">Southern Slo...</div><div class="clip" style="left:562px;top:0;width:78px;height:16px;line-height:16px;letter-spacing:-0.21px;">20% AEP</div><div class="clip" style="left:642px;top:0;width:61px;height:16px;line-height:16px;letter-spacing:-0.14px;">UpperCatch...</div></div>
<div class="clip n" style="left:817px;top:847px;width:703px;height:16px;"><div class="clip" style="left:2px;top:0;width:78px;height:16px;line-height:16px;letter-spacing:-0.21px;">20%AEP_12...</div><div class="clip" style="left:82px;top:0;width:78px;height:16px;line-height:16px;letter-spacing:-0.21px;">20% AEP</div><div class="clip" style="left:162px;top:0;width:78px;height:16px;line-height:16px;letter-spacing:-0.12px;">120</div><div class="clip" style="left:242px;top:0;width:78px;height:16px;line-height:16px;letter-spacing:-0.10px;">2 hours</div><div class="clip" style="left:322px;top:0;width:78px;height:16px;line-height:16px;">5</div><div class="clip" style="left:402px;top:0;width:78px;height:16px;line-height:16px;letter-spacing:0.08px;">frequent</div><div class="clip" style="left:482px;top:0;width:78px;height:16px;line-height:16px;letter-spacing:-0.18px;">Southern Slo...</div><div class="clip" style="left:562px;top:0;width:78px;height:16px;line-height:16px;letter-spacing:-0.21px;">20% AEP</div><div class="clip" style="left:642px;top:0;width:61px;height:16px;line-height:16px;letter-spacing:-0.14px;">UpperCatch...</div></div>
<div class="clip n" style="left:817px;top:863px;width:703px;height:16px;"><div class="clip" style="left:2px;top:0;width:78px;height:16px;line-height:16px;letter-spacing:-0.21px;">20%AEP_12...</div><div class="clip" style="left:82px;top:0;width:78px;height:16px;line-height:16px;letter-spacing:-0.21px;">20% AEP</div><div class="clip" style="left:162px;top:0;width:78px;height:16px;line-height:16px;letter-spacing:-0.12px;">120</div><div class="clip" style="left:242px;top:0;width:78px;height:16px;line-height:16px;letter-spacing:-0.10px;">2 hours</div><div class="clip" style="left:322px;top:0;width:78px;height:16px;line-height:16px;">5</div><div class="clip" style="left:402px;top:0;width:78px;height:16px;line-height:16px;letter-spacing:0.08px;">frequent</div><div class="clip" style="left:482px;top:0;width:78px;height:16px;line-height:16px;letter-spacing:-0.18px;">Southern Slo...</div><div class="clip" style="left:562px;top:0;width:78px;height:16px;line-height:16px;letter-spacing:-0.21px;">20% AEP</div><div class="clip" style="left:642px;top:0;width:61px;height:16px;line-height:16px;letter-spacing:-0.14px;">UpperCatch...</div></div>
<div class="sbv" style="left:1520px;top:765px;width:17px;height:135px;"></div>
<svg style="position:absolute;left:1525px;top:771px" width="8" height="5"><path d="M0 4.5L4 0.5L8 4.5Z" fill="#404040"/></svg>
<svg style="position:absolute;left:1525px;top:890px" width="8" height="5"><path d="M0 0.5L4 4.5L8 0.5Z" fill="#404040"/></svg>
<div class="thv" style="left:1521px;top:783px;width:15px;height:42px;"></div>
<div style="left:1524px;top:800px;width:8px;height:1px;background:#6a6a6a;"></div>
<div style="left:1524px;top:802px;width:8px;height:1px;background:#6a6a6a;"></div>
<div style="left:1524px;top:804px;width:8px;height:1px;background:#6a6a6a;"></div>
<div style="left:1524px;top:806px;width:8px;height:1px;background:#6a6a6a;"></div>
<div style="left:11px;top:878px;width:1549px;height:38px;background:#fff;border:1px solid #808590;"></div>
<svg style="position:absolute;left:30px;top:883px" width="16" height="22" viewBox="0 0 16 22"><defs><linearGradient id="dg" x1="1" y1="0" x2="0" y2="1"><stop offset="0" stop-color="#0aa8e8"/><stop offset="1" stop-color="#0268c4"/></linearGradient></defs><path d="M12.8 1C10.6 2.6 9.9 4.6 10.2 6.9A7 7 0 1 1 2.2 9.6C4 6.5 8 3.4 12.8 1Z" fill="url(#dg)"/><path d="M4.6 9.5V16M3.3 17.2L4.6 15.2L6 17.2M6.4 12L10.2 17.4M9.6 11.6l1.8-.4" stroke="#d6ecf9" stroke-width="0.8" fill="none"/></svg>
<div class="t" style="left:54px;top:885px;height:16px;line-height:16px;color:#0b5cd6;text-decoration:underline;letter-spacing:-0.20px;">Developed by Catchment Simulation Solutions</div>
<div class="btn" style="left:284px;top:882px;width:100px;height:28px;"></div>
<div class="t" style="left:284px;top:882px;width:86px;height:27px;line-height:27px;font-size:11.5px;letter-spacing:-0.70px;text-align:center;color:#909090;text-shadow:0 1px 0 rgba(255,255,255,0.25);">Save</div>
<svg style="position:absolute;left:374px;top:895px" width="6" height="3"><path d="M0 0H6L3 3Z" fill="#8a8a8a"/></svg>
<div class="btn2" style="left:390px;top:882px;width:100px;height:28px;"></div>
<div class="t" style="left:390px;top:882px;width:86px;height:27px;line-height:27px;font-size:11.5px;letter-spacing:-0.40px;text-align:center;color:#000;">Load</div>
<svg style="position:absolute;left:480px;top:895px" width="6" height="3"><path d="M0 0H6L3 3Z" fill="#000"/></svg>
<div class="btn" style="left:810px;top:882px;width:132px;height:28px;"></div>
<div class="t" style="left:810px;top:882px;width:132px;height:27px;line-height:27px;font-size:11.5px;letter-spacing:-0.30px;text-align:center;color:#909090;text-shadow:0 1px 0 rgba(255,255,255,0.25);">5) Prepare Model Runs</div>
<div style="left:948px;top:886px;width:99px;height:19px;background:#fff;border:1px solid #8fb0dd;"><div style="left:2px;top:0;line-height:17px;color:#7a7a7a;">WBNM</div></div>
<svg style="position:absolute;left:1032px;top:893px" width="10" height="6"><path d="M0 0H10L5 5.5Z" fill="#6d7f95"/></svg>
<div style="left:1060px;top:883px;width:81px;height:26px;background:#d1d9e1;"></div>
<div class="btn" style="left:1374px;top:882px;width:96px;height:28px;"></div>
<div class="t" style="left:1374px;top:882px;width:82px;height:27px;line-height:27px;font-size:11.5px;letter-spacing:-0.05px;text-align:center;color:#909090;text-shadow:0 1px 0 rgba(255,255,255,0.25);">Other Tools</div>
<svg style="position:absolute;left:1460px;top:895px" width="6" height="3"><path d="M0 0H6L3 3Z" fill="#8a8a8a"/></svg>
<div class="btn2" style="left:1476px;top:882px;width:77px;height:28px;"></div>
<div class="t" style="left:1476px;top:882px;width:63px;height:27px;line-height:27px;font-size:11.5px;letter-spacing:-0.09px;text-align:center;color:#000;">Help</div>
<svg style="position:absolute;left:1543px;top:895px" width="6" height="3"><path d="M0 0H6L3 3Z" fill="#000"/></svg>
</div></body></html>
